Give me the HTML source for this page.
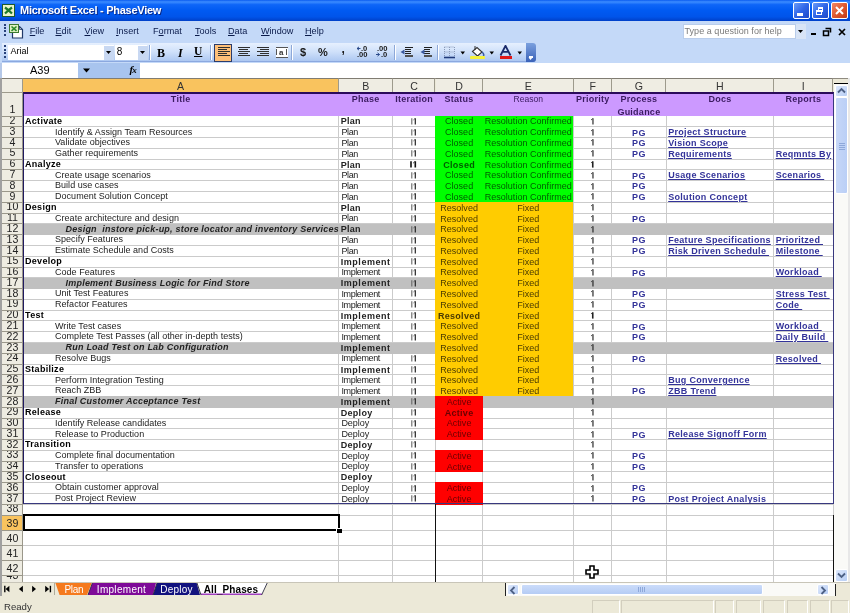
<!DOCTYPE html><html><head><meta charset="utf-8"><style>
html,body{margin:0;padding:0;}
body{width:850px;height:613px;overflow:hidden;position:relative;background:#ECE9D8;font-family:"Liberation Sans", sans-serif;-webkit-font-smoothing:antialiased;}
div{box-sizing:border-box;}
.t{position:absolute;white-space:nowrap;line-height:1;}

</style></head><body><div style="position:absolute;left:0;top:0;width:850px;height:613px;will-change:transform;">
<div style="position:absolute;left:0.00px;top:0.00px;width:850.00px;height:21.00px;background:linear-gradient(#0A5CF0 0%,#3C8CFF 9%,#0E66F8 22%,#005AF2 50%,#0054EA 80%,#0040C8 100%);"></div>
<svg style="position:absolute;left:2px;top:3.5px" width="13" height="13"><rect x="0.5" y="0.5" width="12" height="12" fill="#EAF3C8" stroke="#1E5A2A" stroke-width="1"/><path d="M3 3.5 Q6.5 6 10 9.5 M10 3.5 Q6.5 6 3 9.5" stroke="#1F7A2A" stroke-width="2.2" fill="none"/></svg>
<div class="t" style="left:20px;top:4.5px;font-size:11px;font-weight:bold;color:#fff;letter-spacing:-0.27px;text-shadow:1px 1px 0 #0A2A8A;">Microsoft Excel - PhaseView</div>
<div style="position:absolute;left:793.00px;top:2.00px;width:16.50px;height:17.00px;background:linear-gradient(135deg,#6A9BF8,#2F66E8 50%,#1D48C8);border:1px solid #fff;border-radius:2px;"></div>
<div style="position:absolute;left:812.00px;top:2.00px;width:16.50px;height:17.00px;background:linear-gradient(135deg,#6A9BF8,#2F66E8 50%,#1D48C8);border:1px solid #fff;border-radius:2px;"></div>
<div style="position:absolute;left:831.00px;top:2.00px;width:17.00px;height:17.00px;background:linear-gradient(135deg,#F08868,#E05A30 50%,#C03A18);border:1px solid #fff;border-radius:2px;"></div>
<div style="position:absolute;left:797.00px;top:13.00px;width:6.00px;height:3.00px;background:#fff;"></div>
<div style="position:absolute;left:817.50px;top:7.00px;width:5.50px;height:4.50px;border:1.5px solid #fff;border-top-width:2px;"></div>
<div style="position:absolute;left:815.50px;top:9.50px;width:6.00px;height:5.00px;border:1.5px solid #fff;border-top-width:2px;background:#2F66E8;"></div>
<svg style="position:absolute;left:833px;top:4px" width="13" height="13"><path d="M3 3 L10 10 M10 3 L3 10" stroke="#fff" stroke-width="2" /></svg>
<div style="position:absolute;left:0.00px;top:21.00px;width:850.00px;height:41.50px;background:#C4D9F8;"></div>
<div style="position:absolute;left:4.00px;top:24.00px;width:2.00px;height:2.00px;background:#27417A;"></div>
<div style="position:absolute;left:4.00px;top:27.20px;width:2.00px;height:2.00px;background:#27417A;"></div>
<div style="position:absolute;left:4.00px;top:30.40px;width:2.00px;height:2.00px;background:#27417A;"></div>
<div style="position:absolute;left:4.00px;top:33.60px;width:2.00px;height:2.00px;background:#27417A;"></div>
<svg style="position:absolute;left:8px;top:23px" width="16" height="16"><path d="M4.5 3.5 h7 l3 3 v8.5 h-10 z" fill="#fff" stroke="#203A6A" stroke-width="1.2"/><path d="M11.5 3.5 v3 h3" fill="none" stroke="#203A6A" stroke-width="0.8"/><rect x="1.5" y="1.5" width="9" height="8" fill="#DFF0C0" stroke="#3D7A30" stroke-width="1"/><path d="M3.5 3.5 L8.5 7.8 M8.5 3.5 L3.5 7.8" stroke="#2A8A2A" stroke-width="1.6"/></svg>
<div class="t" style="left:29.7px;top:27.2px;font-size:9.1px;color:#0A1A4A;"><u>F</u>ile</div>
<div class="t" style="left:55.5px;top:27.2px;font-size:9.1px;color:#0A1A4A;"><u>E</u>dit</div>
<div class="t" style="left:84.5px;top:27.2px;font-size:9.1px;color:#0A1A4A;"><u>V</u>iew</div>
<div class="t" style="left:116px;top:27.2px;font-size:9.1px;color:#0A1A4A;"><u>I</u>nsert</div>
<div class="t" style="left:153px;top:27.2px;font-size:9.1px;color:#0A1A4A;">F<u>o</u>rmat</div>
<div class="t" style="left:195px;top:27.2px;font-size:9.1px;color:#0A1A4A;"><u>T</u>ools</div>
<div class="t" style="left:228px;top:27.2px;font-size:9.1px;color:#0A1A4A;"><u>D</u>ata</div>
<div class="t" style="left:261px;top:27.2px;font-size:9.1px;color:#0A1A4A;"><u>W</u>indow</div>
<div class="t" style="left:305px;top:27.2px;font-size:9.1px;color:#0A1A4A;"><u>H</u>elp</div>
<div style="position:absolute;left:683.00px;top:24.00px;width:113.00px;height:15.00px;background:#fff;border:1px solid #B9CDEB;"></div>
<div class="t" style="left:684.5px;top:27px;font-size:9px;letter-spacing:0.05px;color:#7a7a7a;">Type a question for help</div>
<div style="position:absolute;left:796.00px;top:24.00px;width:9.50px;height:15.00px;background:#D8E4F6;"></div>
<svg style="position:absolute;left:797px;top:29px" width="8" height="5"><path d="M1 1 L6 1 L3.5 4 Z" fill="#000"/></svg>
<div style="position:absolute;left:811.00px;top:33.00px;width:5.00px;height:2.00px;background:#000;"></div>
<svg style="position:absolute;left:822px;top:27px" width="10" height="10"><path d="M3.5 1.5 h5 v4 M1.5 4 h5 v4.5 h-5 z" stroke="#000" stroke-width="1.5" fill="none"/></svg>
<svg style="position:absolute;left:837px;top:27px" width="10" height="10"><path d="M2 2 L8 8 M8 2 L2 8" stroke="#000" stroke-width="1.7"/></svg>
<div style="position:absolute;left:2.00px;top:42.50px;width:534.00px;height:19.50px;background:linear-gradient(#E6F0FE,#D0E1FA 45%,#AFC9F2 92%,#7A98D6 100%);border-radius:0 3px 3px 0;"></div>
<div style="position:absolute;left:526.00px;top:42.50px;width:10.00px;height:19.50px;background:linear-gradient(#7BA0DE,#3A62B8);border-radius:0 3px 3px 0;"></div>
<div style="position:absolute;left:528.50px;top:56.00px;width:4.00px;height:1.50px;background:#fff;"></div>
<svg style="position:absolute;left:528px;top:57px" width="6" height="4"><path d="M0.5 0.5 L4.5 0.5 L2.5 3 Z" fill="#fff"/></svg>
<div style="position:absolute;left:4.00px;top:45.00px;width:2.00px;height:2.00px;background:#27417A;"></div>
<div style="position:absolute;left:4.00px;top:48.50px;width:2.00px;height:2.00px;background:#27417A;"></div>
<div style="position:absolute;left:4.00px;top:52.00px;width:2.00px;height:2.00px;background:#27417A;"></div>
<div style="position:absolute;left:4.00px;top:55.50px;width:2.00px;height:2.00px;background:#27417A;"></div>
<div style="position:absolute;left:8.00px;top:45.00px;width:105.50px;height:15.00px;background:#fff;border:1px solid #fff;"></div>
<div class="t" style="left:10.5px;top:47.3px;font-size:9px;color:#000;">Arial</div>
<div style="position:absolute;left:104.00px;top:45.50px;width:9.50px;height:14.00px;background:#C8D8F2;"></div>
<svg style="position:absolute;left:105px;top:50px" width="8" height="5"><path d="M1 1 L6 1 L3.5 4 Z" fill="#000"/></svg>
<div style="position:absolute;left:115.00px;top:45.00px;width:32.00px;height:15.00px;background:#fff;"></div>
<div class="t" style="left:116.8px;top:46.8px;font-size:10px;color:#000;">8</div>
<div style="position:absolute;left:138.00px;top:45.50px;width:9.50px;height:14.00px;background:#C8D8F2;"></div>
<svg style="position:absolute;left:139px;top:50px" width="8" height="5"><path d="M1 1 L6 1 L3.5 4 Z" fill="#000"/></svg>
<div style="position:absolute;left:149.00px;top:45.00px;width:1.00px;height:15.00px;background:#8DA8D8;border-right:1px solid #fff;width:2px;"></div>
<div class="t" style="left:157px;top:46.5px;font-size:12px;font-weight:bold;font-family:'Liberation Serif',serif;color:#000;">B</div>
<div class="t" style="left:178px;top:46.5px;font-size:12px;font-weight:bold;font-style:italic;font-family:'Liberation Serif',serif;color:#000;">I</div>
<div class="t" style="left:194px;top:46px;font-size:11.5px;font-weight:bold;font-family:'Liberation Serif',serif;color:#000;text-decoration:underline;">U</div>
<div style="position:absolute;left:210.00px;top:45.00px;width:1.00px;height:15.00px;background:#8DA8D8;border-right:1px solid #fff;width:2px;"></div>
<div style="position:absolute;left:214.00px;top:43.50px;width:18.00px;height:18.00px;background:#FFC078;border:1px solid #2A3C6C;"></div>
<div style="position:absolute;left:218.00px;top:47.00px;width:12.00px;height:1.40px;background:#303030;"></div>
<div style="position:absolute;left:218.00px;top:49.00px;width:9.00px;height:1.40px;background:#303030;"></div>
<div style="position:absolute;left:218.00px;top:51.00px;width:12.00px;height:1.40px;background:#303030;"></div>
<div style="position:absolute;left:218.00px;top:53.00px;width:9.00px;height:1.40px;background:#303030;"></div>
<div style="position:absolute;left:218.00px;top:55.00px;width:12.00px;height:1.40px;background:#303030;"></div>
<div style="position:absolute;left:237.50px;top:47.00px;width:12.00px;height:1.40px;background:#303030;"></div>
<div style="position:absolute;left:239.00px;top:49.00px;width:9.00px;height:1.40px;background:#303030;"></div>
<div style="position:absolute;left:237.50px;top:51.00px;width:12.00px;height:1.40px;background:#303030;"></div>
<div style="position:absolute;left:239.00px;top:53.00px;width:9.00px;height:1.40px;background:#303030;"></div>
<div style="position:absolute;left:237.50px;top:55.00px;width:12.00px;height:1.40px;background:#303030;"></div>
<div style="position:absolute;left:256.50px;top:47.00px;width:12.00px;height:1.40px;background:#303030;"></div>
<div style="position:absolute;left:259.50px;top:49.00px;width:9.00px;height:1.40px;background:#303030;"></div>
<div style="position:absolute;left:256.50px;top:51.00px;width:12.00px;height:1.40px;background:#303030;"></div>
<div style="position:absolute;left:259.50px;top:53.00px;width:9.00px;height:1.40px;background:#303030;"></div>
<div style="position:absolute;left:256.50px;top:55.00px;width:12.00px;height:1.40px;background:#303030;"></div>
<div style="position:absolute;left:275.50px;top:46.50px;width:12.00px;height:11.00px;border-top:1.5px solid #555;border-bottom:1.5px solid #555;background:#fff;"></div>
<div style="position:absolute;left:275.50px;top:49.00px;width:1.20px;height:6.00px;background:#555;"></div>
<div style="position:absolute;left:286.30px;top:49.00px;width:1.20px;height:6.00px;background:#555;"></div>
<div class="t" style="left:279px;top:48.5px;font-size:8px;font-weight:bold;color:#333;">a</div>
<div style="position:absolute;left:291.00px;top:45.00px;width:1.00px;height:15.00px;background:#8DA8D8;border-right:1px solid #fff;width:2px;"></div>
<div class="t" style="left:300px;top:47px;font-size:11px;font-weight:bold;color:#1a1a1a;">$</div>
<div class="t" style="left:318px;top:47px;font-size:11px;font-weight:bold;color:#1a1a1a;">%</div>
<div class="t" style="left:341.5px;top:43px;font-size:12px;font-weight:bold;color:#1a1a1a;">,</div>
<svg style="position:absolute;left:355px;top:46px" width="36" height="12"><path d="M2 2.5 h3.5 M2 2.5 l2 -1.6 M2 2.5 l2 1.6" stroke="#2A4A8A" stroke-width="1" fill="none"/><path d="M21 8.5 h3.5 M24.5 8.5 l-2 -1.6 M24.5 8.5 l-2 1.6" stroke="#2A4A8A" stroke-width="1" fill="none"/></svg>
<div class="t" style="left:361px;top:45.3px;font-size:7.6px;font-weight:bold;color:#1a1a1a;">.0</div>
<div class="t" style="left:357px;top:50.5px;font-size:7.6px;font-weight:bold;color:#1a1a1a;">.00</div>
<div class="t" style="left:377px;top:45.3px;font-size:7.6px;font-weight:bold;color:#1a1a1a;">.00</div>
<div class="t" style="left:381px;top:50.5px;font-size:7.6px;font-weight:bold;color:#1a1a1a;">.0</div>
<div style="position:absolute;left:393.50px;top:45.00px;width:1.00px;height:15.00px;background:#8DA8D8;border-right:1px solid #fff;width:2px;"></div>
<div style="position:absolute;left:404.50px;top:46.50px;width:8.00px;height:1.40px;background:#202020;"></div>
<div style="position:absolute;left:404.50px;top:48.70px;width:6.00px;height:1.40px;background:#202020;"></div>
<div style="position:absolute;left:404.50px;top:50.90px;width:6.00px;height:1.40px;background:#202020;"></div>
<div style="position:absolute;left:404.50px;top:53.10px;width:6.00px;height:1.40px;background:#202020;"></div>
<div style="position:absolute;left:404.50px;top:55.30px;width:8.00px;height:1.40px;background:#505050;"></div>
<svg style="position:absolute;left:400px;top:49px" width="5" height="6"><path d="M4.5 0.5 L0.5 3 L4.5 5.5 Z" fill="#3A5AA0"/></svg>
<div style="position:absolute;left:424.00px;top:46.50px;width:8.00px;height:1.40px;background:#202020;"></div>
<div style="position:absolute;left:424.00px;top:48.70px;width:6.00px;height:1.40px;background:#202020;"></div>
<div style="position:absolute;left:424.00px;top:50.90px;width:6.00px;height:1.40px;background:#202020;"></div>
<div style="position:absolute;left:424.00px;top:53.10px;width:6.00px;height:1.40px;background:#202020;"></div>
<div style="position:absolute;left:424.00px;top:55.30px;width:8.00px;height:1.40px;background:#505050;"></div>
<svg style="position:absolute;left:419.5px;top:49px" width="5" height="6"><path d="M4.5 0.5 L0.5 3 L4.5 5.5 Z" fill="#3A5AA0"/></svg>
<div style="position:absolute;left:437.00px;top:45.00px;width:1.00px;height:15.00px;background:#8DA8D8;border-right:1px solid #fff;width:2px;"></div>
<svg style="position:absolute;left:443px;top:46px" width="14" height="13"><path d="M1.5 1 v10 M6.5 1 v10 M11.5 1 v10 M1.5 1 h10 M1.5 6 h10" stroke="#8A9AB8" stroke-width="1" stroke-dasharray="1 1" fill="none"/><path d="M1 11.5 h11" stroke="#203A7A" stroke-width="1.6"/></svg>
<svg style="position:absolute;left:460px;top:51px" width="6" height="4"><path d="M0.5 0.5 L5 0.5 L2.75 3.5 Z" fill="#000"/></svg>
<svg style="position:absolute;left:470px;top:45px" width="16" height="16"><path d="M2.5 6.5 L7 2.5 L12 7 L7.5 11 Z" fill="#fff" stroke="#333" stroke-width="1.1"/><path d="M5 1 L5 5" stroke="#333" stroke-width="1"/><path d="M12 7 Q14.5 9 13.5 11" stroke="#3A5AA0" stroke-width="1.5" fill="none"/></svg>
<div style="position:absolute;left:470.00px;top:55.50px;width:14.50px;height:3.50px;background:#F6F23A;border-radius:1px;"></div>
<svg style="position:absolute;left:488.5px;top:51px" width="6" height="4"><path d="M0.5 0.5 L5 0.5 L2.75 3.5 Z" fill="#000"/></svg>
<svg style="position:absolute;left:499px;top:45px" width="14" height="11"><path d="M1.5 10.5 L6.5 0.8 L11.5 10.5 M3.8 6.8 h5.4" stroke="#1A2A6A" stroke-width="1.8" fill="none"/></svg>
<div style="position:absolute;left:499.50px;top:56.00px;width:12.50px;height:3.00px;background:#E01818;"></div>
<svg style="position:absolute;left:516.5px;top:51px" width="6" height="4"><path d="M0.5 0.5 L5 0.5 L2.75 3.5 Z" fill="#000"/></svg>
<div style="position:absolute;left:0.00px;top:62.50px;width:850.00px;height:15.50px;background:#fff;"></div>
<div style="position:absolute;left:0.00px;top:62.50px;width:2.00px;height:15.50px;background:#B5C8E8;"></div>
<div style="position:absolute;left:78.00px;top:62.50px;width:62.00px;height:15.00px;background:#A8C4EE;"></div>
<div class="t" style="left:30px;top:64.5px;font-size:11px;color:#000;">A39</div>
<svg style="position:absolute;left:82px;top:68px" width="9" height="5"><path d="M1 0.5 L8 0.5 L4.5 4.5 Z" fill="#000"/></svg>
<div class="t" style="left:129.5px;top:64.2px;font-size:11px;font-weight:bold;font-style:italic;font-family:'Liberation Serif',serif;color:#000;letter-spacing:-1px;">f<span style="font-size:9px">x</span></div>
<div style="position:absolute;left:0.00px;top:78.00px;width:2.00px;height:504.40px;background:#A0A0A0;"></div>
<div style="position:absolute;left:2.00px;top:78.00px;width:831.00px;height:14.50px;background:#ECE9D8;border-top:1px solid #8F8B80;"></div>
<div style="position:absolute;left:2.00px;top:78.00px;width:20.50px;height:14.50px;background:#EFEDE3;border-top:1px solid #807C72;border-right:1px solid #9D9A8C;border-bottom:1px solid #9D9A8C;"></div>
<div style="position:absolute;left:22.50px;top:78.00px;width:316.20px;height:14.50px;background:#F9C35E;border-top:1px solid #807C72;border-right:1px solid #9D9A8C;border-bottom:1px solid #E8E6DC;"></div>
<div class="t" style="left:22.50px;width:316.20px;text-align:center;top:81.00px;font-size:10.6px;color:#333;">A</div>
<div style="position:absolute;left:338.70px;top:78.00px;width:54.00px;height:14.50px;background:#EFEDE3;border-top:1px solid #807C72;border-right:1px solid #9D9A8C;border-bottom:1px solid #E8E6DC;"></div>
<div class="t" style="left:338.70px;width:54.00px;text-align:center;top:81.00px;font-size:10.6px;color:#333;">B</div>
<div style="position:absolute;left:392.70px;top:78.00px;width:42.80px;height:14.50px;background:#EFEDE3;border-top:1px solid #807C72;border-right:1px solid #9D9A8C;border-bottom:1px solid #E8E6DC;"></div>
<div class="t" style="left:392.70px;width:42.80px;text-align:center;top:81.00px;font-size:10.6px;color:#333;">C</div>
<div style="position:absolute;left:435.50px;top:78.00px;width:47.20px;height:14.50px;background:#EFEDE3;border-top:1px solid #807C72;border-right:1px solid #9D9A8C;border-bottom:1px solid #E8E6DC;"></div>
<div class="t" style="left:435.50px;width:47.20px;text-align:center;top:81.00px;font-size:10.6px;color:#333;">D</div>
<div style="position:absolute;left:482.70px;top:78.00px;width:91.10px;height:14.50px;background:#EFEDE3;border-top:1px solid #807C72;border-right:1px solid #9D9A8C;border-bottom:1px solid #E8E6DC;"></div>
<div class="t" style="left:482.70px;width:91.10px;text-align:center;top:81.00px;font-size:10.6px;color:#333;">E</div>
<div style="position:absolute;left:573.80px;top:78.00px;width:37.80px;height:14.50px;background:#EFEDE3;border-top:1px solid #807C72;border-right:1px solid #9D9A8C;border-bottom:1px solid #E8E6DC;"></div>
<div class="t" style="left:573.80px;width:37.80px;text-align:center;top:81.00px;font-size:10.6px;color:#333;">F</div>
<div style="position:absolute;left:611.60px;top:78.00px;width:54.60px;height:14.50px;background:#EFEDE3;border-top:1px solid #807C72;border-right:1px solid #9D9A8C;border-bottom:1px solid #E8E6DC;"></div>
<div class="t" style="left:611.60px;width:54.60px;text-align:center;top:81.00px;font-size:10.6px;color:#333;">G</div>
<div style="position:absolute;left:666.20px;top:78.00px;width:107.50px;height:14.50px;background:#EFEDE3;border-top:1px solid #807C72;border-right:1px solid #9D9A8C;border-bottom:1px solid #E8E6DC;"></div>
<div class="t" style="left:666.20px;width:107.50px;text-align:center;top:81.00px;font-size:10.6px;color:#333;">H</div>
<div style="position:absolute;left:773.70px;top:78.00px;width:59.30px;height:14.50px;background:#EFEDE3;border-top:1px solid #807C72;border-right:1px solid #9D9A8C;border-bottom:1px solid #E8E6DC;"></div>
<div class="t" style="left:773.70px;width:59.30px;text-align:center;top:81.00px;font-size:10.6px;color:#333;">I</div>
<div style="position:absolute;left:833.00px;top:78.00px;width:17.00px;height:6.00px;background:#ECE9D8;border-top:1px solid #8F8B80;"></div>
<div style="position:absolute;left:834.00px;top:83.00px;width:14.00px;height:1.50px;background:#000;"></div>
<div style="position:absolute;left:22.50px;top:92.50px;width:810.50px;height:489.90px;background:#fff;"></div>
<div style="position:absolute;left:2.00px;top:93.00px;width:20.00px;height:23.50px;background:#EEECE2;overflow:hidden;"><div class="t" style="left:0.5px;width:100%;text-align:center;bottom:1.6px;font-size:10.6px;color:#222;">1</div></div>
<div style="position:absolute;left:2.00px;top:115.50px;width:20.50px;height:1.00px;background:#9A978A;"></div>
<div style="position:absolute;left:2.00px;top:116.50px;width:20.00px;height:10.79px;background:#EEECE2;overflow:hidden;"><div class="t" style="left:0.5px;width:100%;text-align:center;bottom:1.6px;font-size:10.6px;color:#222;">2</div></div>
<div style="position:absolute;left:2.00px;top:126.29px;width:20.50px;height:1.00px;background:#9A978A;"></div>
<div style="position:absolute;left:2.00px;top:127.29px;width:20.00px;height:10.79px;background:#EEECE2;overflow:hidden;"><div class="t" style="left:0.5px;width:100%;text-align:center;bottom:1.6px;font-size:10.6px;color:#222;">3</div></div>
<div style="position:absolute;left:2.00px;top:137.07px;width:20.50px;height:1.00px;background:#9A978A;"></div>
<div style="position:absolute;left:2.00px;top:138.07px;width:20.00px;height:10.79px;background:#EEECE2;overflow:hidden;"><div class="t" style="left:0.5px;width:100%;text-align:center;bottom:1.6px;font-size:10.6px;color:#222;">4</div></div>
<div style="position:absolute;left:2.00px;top:147.86px;width:20.50px;height:1.00px;background:#9A978A;"></div>
<div style="position:absolute;left:2.00px;top:148.86px;width:20.00px;height:10.79px;background:#EEECE2;overflow:hidden;"><div class="t" style="left:0.5px;width:100%;text-align:center;bottom:1.6px;font-size:10.6px;color:#222;">5</div></div>
<div style="position:absolute;left:2.00px;top:158.64px;width:20.50px;height:1.00px;background:#9A978A;"></div>
<div style="position:absolute;left:2.00px;top:159.64px;width:20.00px;height:10.79px;background:#EEECE2;overflow:hidden;"><div class="t" style="left:0.5px;width:100%;text-align:center;bottom:1.6px;font-size:10.6px;color:#222;">6</div></div>
<div style="position:absolute;left:2.00px;top:169.43px;width:20.50px;height:1.00px;background:#9A978A;"></div>
<div style="position:absolute;left:2.00px;top:170.43px;width:20.00px;height:10.79px;background:#EEECE2;overflow:hidden;"><div class="t" style="left:0.5px;width:100%;text-align:center;bottom:1.6px;font-size:10.6px;color:#222;">7</div></div>
<div style="position:absolute;left:2.00px;top:180.22px;width:20.50px;height:1.00px;background:#9A978A;"></div>
<div style="position:absolute;left:2.00px;top:181.22px;width:20.00px;height:10.79px;background:#EEECE2;overflow:hidden;"><div class="t" style="left:0.5px;width:100%;text-align:center;bottom:1.6px;font-size:10.6px;color:#222;">8</div></div>
<div style="position:absolute;left:2.00px;top:191.00px;width:20.50px;height:1.00px;background:#9A978A;"></div>
<div style="position:absolute;left:2.00px;top:192.00px;width:20.00px;height:10.79px;background:#EEECE2;overflow:hidden;"><div class="t" style="left:0.5px;width:100%;text-align:center;bottom:1.6px;font-size:10.6px;color:#222;">9</div></div>
<div style="position:absolute;left:2.00px;top:201.79px;width:20.50px;height:1.00px;background:#9A978A;"></div>
<div style="position:absolute;left:2.00px;top:202.79px;width:20.00px;height:10.79px;background:#EEECE2;overflow:hidden;"><div class="t" style="left:0.5px;width:100%;text-align:center;bottom:1.6px;font-size:10.6px;color:#222;">10</div></div>
<div style="position:absolute;left:2.00px;top:212.57px;width:20.50px;height:1.00px;background:#9A978A;"></div>
<div style="position:absolute;left:2.00px;top:213.57px;width:20.00px;height:10.79px;background:#EEECE2;overflow:hidden;"><div class="t" style="left:0.5px;width:100%;text-align:center;bottom:1.6px;font-size:10.6px;color:#222;">11</div></div>
<div style="position:absolute;left:2.00px;top:223.36px;width:20.50px;height:1.00px;background:#9A978A;"></div>
<div style="position:absolute;left:2.00px;top:224.36px;width:20.00px;height:10.79px;background:#EEECE2;overflow:hidden;"><div class="t" style="left:0.5px;width:100%;text-align:center;bottom:1.6px;font-size:10.6px;color:#222;">12</div></div>
<div style="position:absolute;left:2.00px;top:234.15px;width:20.50px;height:1.00px;background:#9A978A;"></div>
<div style="position:absolute;left:2.00px;top:235.15px;width:20.00px;height:10.79px;background:#EEECE2;overflow:hidden;"><div class="t" style="left:0.5px;width:100%;text-align:center;bottom:1.6px;font-size:10.6px;color:#222;">13</div></div>
<div style="position:absolute;left:2.00px;top:244.93px;width:20.50px;height:1.00px;background:#9A978A;"></div>
<div style="position:absolute;left:2.00px;top:245.93px;width:20.00px;height:10.79px;background:#EEECE2;overflow:hidden;"><div class="t" style="left:0.5px;width:100%;text-align:center;bottom:1.6px;font-size:10.6px;color:#222;">14</div></div>
<div style="position:absolute;left:2.00px;top:255.72px;width:20.50px;height:1.00px;background:#9A978A;"></div>
<div style="position:absolute;left:2.00px;top:256.72px;width:20.00px;height:10.79px;background:#EEECE2;overflow:hidden;"><div class="t" style="left:0.5px;width:100%;text-align:center;bottom:1.6px;font-size:10.6px;color:#222;">15</div></div>
<div style="position:absolute;left:2.00px;top:266.50px;width:20.50px;height:1.00px;background:#9A978A;"></div>
<div style="position:absolute;left:2.00px;top:267.50px;width:20.00px;height:10.79px;background:#EEECE2;overflow:hidden;"><div class="t" style="left:0.5px;width:100%;text-align:center;bottom:1.6px;font-size:10.6px;color:#222;">16</div></div>
<div style="position:absolute;left:2.00px;top:277.29px;width:20.50px;height:1.00px;background:#9A978A;"></div>
<div style="position:absolute;left:2.00px;top:278.29px;width:20.00px;height:10.79px;background:#EEECE2;overflow:hidden;"><div class="t" style="left:0.5px;width:100%;text-align:center;bottom:1.6px;font-size:10.6px;color:#222;">17</div></div>
<div style="position:absolute;left:2.00px;top:288.08px;width:20.50px;height:1.00px;background:#9A978A;"></div>
<div style="position:absolute;left:2.00px;top:289.08px;width:20.00px;height:10.79px;background:#EEECE2;overflow:hidden;"><div class="t" style="left:0.5px;width:100%;text-align:center;bottom:1.6px;font-size:10.6px;color:#222;">18</div></div>
<div style="position:absolute;left:2.00px;top:298.86px;width:20.50px;height:1.00px;background:#9A978A;"></div>
<div style="position:absolute;left:2.00px;top:299.86px;width:20.00px;height:10.79px;background:#EEECE2;overflow:hidden;"><div class="t" style="left:0.5px;width:100%;text-align:center;bottom:1.6px;font-size:10.6px;color:#222;">19</div></div>
<div style="position:absolute;left:2.00px;top:309.65px;width:20.50px;height:1.00px;background:#9A978A;"></div>
<div style="position:absolute;left:2.00px;top:310.65px;width:20.00px;height:10.79px;background:#EEECE2;overflow:hidden;"><div class="t" style="left:0.5px;width:100%;text-align:center;bottom:1.6px;font-size:10.6px;color:#222;">20</div></div>
<div style="position:absolute;left:2.00px;top:320.43px;width:20.50px;height:1.00px;background:#9A978A;"></div>
<div style="position:absolute;left:2.00px;top:321.43px;width:20.00px;height:10.79px;background:#EEECE2;overflow:hidden;"><div class="t" style="left:0.5px;width:100%;text-align:center;bottom:1.6px;font-size:10.6px;color:#222;">21</div></div>
<div style="position:absolute;left:2.00px;top:331.22px;width:20.50px;height:1.00px;background:#9A978A;"></div>
<div style="position:absolute;left:2.00px;top:332.22px;width:20.00px;height:10.79px;background:#EEECE2;overflow:hidden;"><div class="t" style="left:0.5px;width:100%;text-align:center;bottom:1.6px;font-size:10.6px;color:#222;">22</div></div>
<div style="position:absolute;left:2.00px;top:342.01px;width:20.50px;height:1.00px;background:#9A978A;"></div>
<div style="position:absolute;left:2.00px;top:343.01px;width:20.00px;height:10.79px;background:#EEECE2;overflow:hidden;"><div class="t" style="left:0.5px;width:100%;text-align:center;bottom:1.6px;font-size:10.6px;color:#222;">23</div></div>
<div style="position:absolute;left:2.00px;top:352.79px;width:20.50px;height:1.00px;background:#9A978A;"></div>
<div style="position:absolute;left:2.00px;top:353.79px;width:20.00px;height:10.79px;background:#EEECE2;overflow:hidden;"><div class="t" style="left:0.5px;width:100%;text-align:center;bottom:1.6px;font-size:10.6px;color:#222;">24</div></div>
<div style="position:absolute;left:2.00px;top:363.58px;width:20.50px;height:1.00px;background:#9A978A;"></div>
<div style="position:absolute;left:2.00px;top:364.58px;width:20.00px;height:10.79px;background:#EEECE2;overflow:hidden;"><div class="t" style="left:0.5px;width:100%;text-align:center;bottom:1.6px;font-size:10.6px;color:#222;">25</div></div>
<div style="position:absolute;left:2.00px;top:374.36px;width:20.50px;height:1.00px;background:#9A978A;"></div>
<div style="position:absolute;left:2.00px;top:375.36px;width:20.00px;height:10.79px;background:#EEECE2;overflow:hidden;"><div class="t" style="left:0.5px;width:100%;text-align:center;bottom:1.6px;font-size:10.6px;color:#222;">26</div></div>
<div style="position:absolute;left:2.00px;top:385.15px;width:20.50px;height:1.00px;background:#9A978A;"></div>
<div style="position:absolute;left:2.00px;top:386.15px;width:20.00px;height:10.79px;background:#EEECE2;overflow:hidden;"><div class="t" style="left:0.5px;width:100%;text-align:center;bottom:1.6px;font-size:10.6px;color:#222;">27</div></div>
<div style="position:absolute;left:2.00px;top:395.94px;width:20.50px;height:1.00px;background:#9A978A;"></div>
<div style="position:absolute;left:2.00px;top:396.94px;width:20.00px;height:10.79px;background:#EEECE2;overflow:hidden;"><div class="t" style="left:0.5px;width:100%;text-align:center;bottom:1.6px;font-size:10.6px;color:#222;">28</div></div>
<div style="position:absolute;left:2.00px;top:406.72px;width:20.50px;height:1.00px;background:#9A978A;"></div>
<div style="position:absolute;left:2.00px;top:407.72px;width:20.00px;height:10.79px;background:#EEECE2;overflow:hidden;"><div class="t" style="left:0.5px;width:100%;text-align:center;bottom:1.6px;font-size:10.6px;color:#222;">29</div></div>
<div style="position:absolute;left:2.00px;top:417.51px;width:20.50px;height:1.00px;background:#9A978A;"></div>
<div style="position:absolute;left:2.00px;top:418.51px;width:20.00px;height:10.79px;background:#EEECE2;overflow:hidden;"><div class="t" style="left:0.5px;width:100%;text-align:center;bottom:1.6px;font-size:10.6px;color:#222;">30</div></div>
<div style="position:absolute;left:2.00px;top:428.29px;width:20.50px;height:1.00px;background:#9A978A;"></div>
<div style="position:absolute;left:2.00px;top:429.29px;width:20.00px;height:10.79px;background:#EEECE2;overflow:hidden;"><div class="t" style="left:0.5px;width:100%;text-align:center;bottom:1.6px;font-size:10.6px;color:#222;">31</div></div>
<div style="position:absolute;left:2.00px;top:439.08px;width:20.50px;height:1.00px;background:#9A978A;"></div>
<div style="position:absolute;left:2.00px;top:440.08px;width:20.00px;height:10.79px;background:#EEECE2;overflow:hidden;"><div class="t" style="left:0.5px;width:100%;text-align:center;bottom:1.6px;font-size:10.6px;color:#222;">32</div></div>
<div style="position:absolute;left:2.00px;top:449.87px;width:20.50px;height:1.00px;background:#9A978A;"></div>
<div style="position:absolute;left:2.00px;top:450.87px;width:20.00px;height:10.79px;background:#EEECE2;overflow:hidden;"><div class="t" style="left:0.5px;width:100%;text-align:center;bottom:1.6px;font-size:10.6px;color:#222;">33</div></div>
<div style="position:absolute;left:2.00px;top:460.65px;width:20.50px;height:1.00px;background:#9A978A;"></div>
<div style="position:absolute;left:2.00px;top:461.65px;width:20.00px;height:10.79px;background:#EEECE2;overflow:hidden;"><div class="t" style="left:0.5px;width:100%;text-align:center;bottom:1.6px;font-size:10.6px;color:#222;">34</div></div>
<div style="position:absolute;left:2.00px;top:471.44px;width:20.50px;height:1.00px;background:#9A978A;"></div>
<div style="position:absolute;left:2.00px;top:472.44px;width:20.00px;height:10.79px;background:#EEECE2;overflow:hidden;"><div class="t" style="left:0.5px;width:100%;text-align:center;bottom:1.6px;font-size:10.6px;color:#222;">35</div></div>
<div style="position:absolute;left:2.00px;top:482.22px;width:20.50px;height:1.00px;background:#9A978A;"></div>
<div style="position:absolute;left:2.00px;top:483.22px;width:20.00px;height:10.79px;background:#EEECE2;overflow:hidden;"><div class="t" style="left:0.5px;width:100%;text-align:center;bottom:1.6px;font-size:10.6px;color:#222;">36</div></div>
<div style="position:absolute;left:2.00px;top:493.01px;width:20.50px;height:1.00px;background:#9A978A;"></div>
<div style="position:absolute;left:2.00px;top:494.01px;width:20.00px;height:10.79px;background:#EEECE2;overflow:hidden;"><div class="t" style="left:0.5px;width:100%;text-align:center;bottom:1.6px;font-size:10.6px;color:#222;">37</div></div>
<div style="position:absolute;left:2.00px;top:503.80px;width:20.50px;height:1.00px;background:#9A978A;"></div>
<div style="position:absolute;left:2.00px;top:504.80px;width:20.00px;height:10.79px;background:#EEECE2;overflow:hidden;"><div class="t" style="left:0.5px;width:100%;text-align:center;bottom:1.6px;font-size:10.6px;color:#222;">38</div></div>
<div style="position:absolute;left:2.00px;top:514.58px;width:20.50px;height:1.00px;background:#9A978A;"></div>
<div style="position:absolute;left:2.00px;top:515.58px;width:20.00px;height:15.20px;background:#F9C35E;overflow:hidden;"><div class="t" style="left:0.5px;width:100%;text-align:center;bottom:2.6px;font-size:10.6px;color:#222;">39</div></div>
<div style="position:absolute;left:2.00px;top:529.78px;width:20.50px;height:1.00px;background:#9A978A;"></div>
<div style="position:absolute;left:2.00px;top:530.78px;width:20.00px;height:15.20px;background:#EEECE2;overflow:hidden;"><div class="t" style="left:0.5px;width:100%;text-align:center;bottom:2.6px;font-size:10.6px;color:#222;">40</div></div>
<div style="position:absolute;left:2.00px;top:544.98px;width:20.50px;height:1.00px;background:#9A978A;"></div>
<div style="position:absolute;left:2.00px;top:545.98px;width:20.00px;height:15.20px;background:#EEECE2;overflow:hidden;"><div class="t" style="left:0.5px;width:100%;text-align:center;bottom:2.6px;font-size:10.6px;color:#222;">41</div></div>
<div style="position:absolute;left:2.00px;top:560.18px;width:20.50px;height:1.00px;background:#9A978A;"></div>
<div style="position:absolute;left:2.00px;top:561.18px;width:20.00px;height:15.20px;background:#EEECE2;overflow:hidden;"><div class="t" style="left:0.5px;width:100%;text-align:center;bottom:2.6px;font-size:10.6px;color:#222;">42</div></div>
<div style="position:absolute;left:2.00px;top:575.38px;width:20.50px;height:1.00px;background:#9A978A;"></div>
<div style="position:absolute;left:2.00px;top:576.38px;width:20.00px;height:6.52px;background:#EEECE2;overflow:hidden;"><div class="t" style="left:0.5px;width:100%;text-align:center;bottom:2.6px;font-size:10.6px;color:#222;">43</div></div>
<div style="position:absolute;left:21.50px;top:92.50px;width:1.00px;height:489.90px;background:#9A978A;"></div>
<div style="position:absolute;left:22.50px;top:126.29px;width:810.50px;height:1.00px;background:#CBCBCB;"></div>
<div style="position:absolute;left:22.50px;top:137.07px;width:810.50px;height:1.00px;background:#CBCBCB;"></div>
<div style="position:absolute;left:22.50px;top:147.86px;width:810.50px;height:1.00px;background:#CBCBCB;"></div>
<div style="position:absolute;left:22.50px;top:158.64px;width:810.50px;height:1.00px;background:#CBCBCB;"></div>
<div style="position:absolute;left:22.50px;top:169.43px;width:810.50px;height:1.00px;background:#CBCBCB;"></div>
<div style="position:absolute;left:22.50px;top:180.22px;width:810.50px;height:1.00px;background:#CBCBCB;"></div>
<div style="position:absolute;left:22.50px;top:191.00px;width:810.50px;height:1.00px;background:#CBCBCB;"></div>
<div style="position:absolute;left:22.50px;top:201.79px;width:810.50px;height:1.00px;background:#CBCBCB;"></div>
<div style="position:absolute;left:22.50px;top:212.57px;width:810.50px;height:1.00px;background:#CBCBCB;"></div>
<div style="position:absolute;left:22.50px;top:223.36px;width:810.50px;height:1.00px;background:#CBCBCB;"></div>
<div style="position:absolute;left:22.50px;top:234.15px;width:810.50px;height:1.00px;background:#CBCBCB;"></div>
<div style="position:absolute;left:22.50px;top:244.93px;width:810.50px;height:1.00px;background:#CBCBCB;"></div>
<div style="position:absolute;left:22.50px;top:255.72px;width:810.50px;height:1.00px;background:#CBCBCB;"></div>
<div style="position:absolute;left:22.50px;top:266.50px;width:810.50px;height:1.00px;background:#CBCBCB;"></div>
<div style="position:absolute;left:22.50px;top:277.29px;width:810.50px;height:1.00px;background:#CBCBCB;"></div>
<div style="position:absolute;left:22.50px;top:288.08px;width:810.50px;height:1.00px;background:#CBCBCB;"></div>
<div style="position:absolute;left:22.50px;top:298.86px;width:810.50px;height:1.00px;background:#CBCBCB;"></div>
<div style="position:absolute;left:22.50px;top:309.65px;width:810.50px;height:1.00px;background:#CBCBCB;"></div>
<div style="position:absolute;left:22.50px;top:320.43px;width:810.50px;height:1.00px;background:#CBCBCB;"></div>
<div style="position:absolute;left:22.50px;top:331.22px;width:810.50px;height:1.00px;background:#CBCBCB;"></div>
<div style="position:absolute;left:22.50px;top:342.01px;width:810.50px;height:1.00px;background:#CBCBCB;"></div>
<div style="position:absolute;left:22.50px;top:352.79px;width:810.50px;height:1.00px;background:#CBCBCB;"></div>
<div style="position:absolute;left:22.50px;top:363.58px;width:810.50px;height:1.00px;background:#CBCBCB;"></div>
<div style="position:absolute;left:22.50px;top:374.36px;width:810.50px;height:1.00px;background:#CBCBCB;"></div>
<div style="position:absolute;left:22.50px;top:385.15px;width:810.50px;height:1.00px;background:#CBCBCB;"></div>
<div style="position:absolute;left:22.50px;top:395.94px;width:810.50px;height:1.00px;background:#CBCBCB;"></div>
<div style="position:absolute;left:22.50px;top:406.72px;width:810.50px;height:1.00px;background:#CBCBCB;"></div>
<div style="position:absolute;left:22.50px;top:417.51px;width:810.50px;height:1.00px;background:#CBCBCB;"></div>
<div style="position:absolute;left:22.50px;top:428.29px;width:810.50px;height:1.00px;background:#CBCBCB;"></div>
<div style="position:absolute;left:22.50px;top:439.08px;width:810.50px;height:1.00px;background:#CBCBCB;"></div>
<div style="position:absolute;left:22.50px;top:449.87px;width:810.50px;height:1.00px;background:#CBCBCB;"></div>
<div style="position:absolute;left:22.50px;top:460.65px;width:810.50px;height:1.00px;background:#CBCBCB;"></div>
<div style="position:absolute;left:22.50px;top:471.44px;width:810.50px;height:1.00px;background:#CBCBCB;"></div>
<div style="position:absolute;left:22.50px;top:482.22px;width:810.50px;height:1.00px;background:#CBCBCB;"></div>
<div style="position:absolute;left:22.50px;top:493.01px;width:810.50px;height:1.00px;background:#CBCBCB;"></div>
<div style="position:absolute;left:22.50px;top:503.80px;width:810.50px;height:1.00px;background:#CBCBCB;"></div>
<div style="position:absolute;left:22.50px;top:514.58px;width:810.50px;height:1.00px;background:#CBCBCB;"></div>
<div style="position:absolute;left:22.50px;top:529.78px;width:810.50px;height:1.00px;background:#CBCBCB;"></div>
<div style="position:absolute;left:22.50px;top:544.98px;width:810.50px;height:1.00px;background:#CBCBCB;"></div>
<div style="position:absolute;left:22.50px;top:560.18px;width:810.50px;height:1.00px;background:#CBCBCB;"></div>
<div style="position:absolute;left:22.50px;top:575.38px;width:810.50px;height:1.00px;background:#CBCBCB;"></div>
<div style="position:absolute;left:338.20px;top:92.50px;width:1.00px;height:489.90px;background:#CBCBCB;"></div>
<div style="position:absolute;left:392.20px;top:92.50px;width:1.00px;height:489.90px;background:#CBCBCB;"></div>
<div style="position:absolute;left:435.00px;top:92.50px;width:1.00px;height:489.90px;background:#CBCBCB;"></div>
<div style="position:absolute;left:482.20px;top:92.50px;width:1.00px;height:489.90px;background:#CBCBCB;"></div>
<div style="position:absolute;left:573.30px;top:92.50px;width:1.00px;height:489.90px;background:#CBCBCB;"></div>
<div style="position:absolute;left:611.10px;top:92.50px;width:1.00px;height:489.90px;background:#CBCBCB;"></div>
<div style="position:absolute;left:665.70px;top:92.50px;width:1.00px;height:489.90px;background:#CBCBCB;"></div>
<div style="position:absolute;left:773.20px;top:92.50px;width:1.00px;height:489.90px;background:#CBCBCB;"></div>
<div style="position:absolute;left:832.50px;top:92.50px;width:1.00px;height:489.90px;background:#CBCBCB;"></div>
<div style="position:absolute;left:22.50px;top:92.50px;width:810.50px;height:23.40px;background:#CC99FF;"></div>
<div style="position:absolute;left:434.80px;top:115.50px;width:138.70px;height:11.79px;background:#00FF00;"></div>
<div style="position:absolute;left:434.80px;top:126.29px;width:138.70px;height:11.79px;background:#00FF00;"></div>
<div style="position:absolute;left:434.80px;top:137.07px;width:138.70px;height:11.79px;background:#00FF00;"></div>
<div style="position:absolute;left:434.80px;top:147.86px;width:138.70px;height:11.79px;background:#00FF00;"></div>
<div style="position:absolute;left:434.80px;top:158.64px;width:138.70px;height:11.79px;background:#00FF00;"></div>
<div style="position:absolute;left:434.80px;top:169.43px;width:138.70px;height:11.79px;background:#00FF00;"></div>
<div style="position:absolute;left:434.80px;top:180.22px;width:138.70px;height:11.79px;background:#00FF00;"></div>
<div style="position:absolute;left:434.80px;top:191.00px;width:138.70px;height:11.79px;background:#00FF00;"></div>
<div style="position:absolute;left:434.80px;top:201.79px;width:138.70px;height:11.79px;background:#FFCC00;"></div>
<div style="position:absolute;left:434.80px;top:212.57px;width:138.70px;height:11.79px;background:#FFCC00;"></div>
<div style="position:absolute;left:23.50px;top:223.86px;width:809.50px;height:11.29px;background:#C0C0C0;"></div>
<div style="position:absolute;left:434.80px;top:223.36px;width:138.70px;height:11.79px;background:#FFCC00;"></div>
<div style="position:absolute;left:434.80px;top:234.15px;width:138.70px;height:11.79px;background:#FFCC00;"></div>
<div style="position:absolute;left:434.80px;top:244.93px;width:138.70px;height:11.79px;background:#FFCC00;"></div>
<div style="position:absolute;left:434.80px;top:255.72px;width:138.70px;height:11.79px;background:#FFCC00;"></div>
<div style="position:absolute;left:434.80px;top:266.50px;width:138.70px;height:11.79px;background:#FFCC00;"></div>
<div style="position:absolute;left:23.50px;top:277.79px;width:809.50px;height:11.29px;background:#C0C0C0;"></div>
<div style="position:absolute;left:434.80px;top:277.29px;width:138.70px;height:11.79px;background:#FFCC00;"></div>
<div style="position:absolute;left:434.80px;top:288.08px;width:138.70px;height:11.79px;background:#FFCC00;"></div>
<div style="position:absolute;left:434.80px;top:298.86px;width:138.70px;height:11.79px;background:#FFCC00;"></div>
<div style="position:absolute;left:434.80px;top:309.65px;width:138.70px;height:11.79px;background:#FFCC00;"></div>
<div style="position:absolute;left:434.80px;top:320.43px;width:138.70px;height:11.79px;background:#FFCC00;"></div>
<div style="position:absolute;left:434.80px;top:331.22px;width:138.70px;height:11.79px;background:#FFCC00;"></div>
<div style="position:absolute;left:23.50px;top:342.51px;width:809.50px;height:11.29px;background:#C0C0C0;"></div>
<div style="position:absolute;left:434.80px;top:342.01px;width:138.70px;height:11.79px;background:#FFCC00;"></div>
<div style="position:absolute;left:434.80px;top:352.79px;width:138.70px;height:11.79px;background:#FFCC00;"></div>
<div style="position:absolute;left:434.80px;top:363.58px;width:138.70px;height:11.79px;background:#FFCC00;"></div>
<div style="position:absolute;left:434.80px;top:374.36px;width:138.70px;height:11.79px;background:#FFCC00;"></div>
<div style="position:absolute;left:434.80px;top:385.15px;width:138.70px;height:11.79px;background:#FFCC00;"></div>
<div style="position:absolute;left:23.50px;top:396.44px;width:809.50px;height:11.29px;background:#C0C0C0;"></div>
<div style="position:absolute;left:434.80px;top:395.94px;width:47.90px;height:11.79px;background:#FF0000;"></div>
<div style="position:absolute;left:434.80px;top:406.72px;width:47.90px;height:11.79px;background:#FF0000;"></div>
<div style="position:absolute;left:434.80px;top:417.51px;width:47.90px;height:11.79px;background:#FF0000;"></div>
<div style="position:absolute;left:434.80px;top:428.29px;width:47.90px;height:11.79px;background:#FF0000;"></div>
<div style="position:absolute;left:434.80px;top:449.87px;width:47.90px;height:11.79px;background:#FF0000;"></div>
<div style="position:absolute;left:434.80px;top:460.65px;width:47.90px;height:11.79px;background:#FF0000;"></div>
<div style="position:absolute;left:434.80px;top:482.22px;width:47.90px;height:11.79px;background:#FF0000;"></div>
<div style="position:absolute;left:434.80px;top:493.01px;width:47.90px;height:11.79px;background:#FF0000;"></div>
<div class="t" style="left:22.50px;width:316.20px;text-align:center;top:93.10px;font-size:9.0px;line-height:12.5px;color:#3A1A60;font-weight:bold;letter-spacing:0.25px;">Title</div>
<div class="t" style="left:338.70px;width:54.00px;text-align:center;top:93.10px;font-size:9.0px;line-height:12.5px;color:#3A1A60;font-weight:bold;letter-spacing:0.25px;">Phase</div>
<div class="t" style="left:392.70px;width:42.80px;text-align:center;top:93.10px;font-size:9.0px;line-height:12.5px;color:#3A1A60;font-weight:bold;letter-spacing:0.25px;">Iteration</div>
<div class="t" style="left:435.50px;width:47.20px;text-align:center;top:93.10px;font-size:9.0px;line-height:12.5px;color:#3A1A60;font-weight:bold;letter-spacing:0.25px;">Status</div>
<div class="t" style="left:482.70px;width:91.10px;text-align:center;top:93.10px;font-size:8.549999999999999px;line-height:12.5px;color:#3A1A60;">Reason</div>
<div class="t" style="left:573.80px;width:37.80px;text-align:center;top:93.10px;font-size:9.0px;line-height:12.5px;color:#3A1A60;font-weight:bold;letter-spacing:0.25px;">Priority</div>
<div class="t" style="left:611.60px;width:54.60px;text-align:center;top:93.10px;font-size:9.0px;line-height:12.5px;color:#3A1A60;font-weight:bold;letter-spacing:0.25px;">Process<br>Guidance</div>
<div class="t" style="left:666.20px;width:107.50px;text-align:center;top:93.10px;font-size:9.0px;line-height:12.5px;color:#3A1A60;font-weight:bold;letter-spacing:0.25px;">Docs</div>
<div class="t" style="left:773.70px;width:59.30px;text-align:center;top:93.10px;font-size:9.0px;line-height:12.5px;color:#3A1A60;font-weight:bold;letter-spacing:0.25px;">Reports</div>
<div class="t" style="left:25.00px;top:116.77px;font-size:9.0px;color:#000;font-weight:bold;letter-spacing:0.30px;">Activate</div>
<div class="t" style="left:340.70px;top:117.47px;font-size:9.0px;color:#222;font-weight:bold;letter-spacing:0.30px;">Plan</div>
<svg style="position:absolute;left:409px;top:117.90px" width="10" height="8"><path d="M2.8 0.3 V6.6" stroke="#666" stroke-width="1.1"/><path d="M6.3 0.3 V6.6" stroke="#222" stroke-width="1.2"/><path d="M5.9 0.6 L4.5 1.9" stroke="#444" stroke-width="0.9"/></svg>
<div class="t" style="left:435.50px;width:47.20px;text-align:center;top:117.47px;font-size:9.0px;color:#005C00;letter-spacing:0.03px;">Closed</div>
<div class="t" style="left:482.70px;width:91.10px;text-align:center;top:117.47px;font-size:9.0px;color:#005C00;letter-spacing:0.03px;">Resolution Confirmed</div>
<svg style="position:absolute;left:590.00px;top:117.90px" width="5" height="8"><path d="M2.97 0.3 L2.97 6.6" stroke="#222" stroke-width="1.15"/><path d="M2.72 0.6 L1.0 2.0" stroke="#444" stroke-width="0.9"/></svg>
<div class="t" style="left:55.00px;top:127.55px;font-size:9.0px;color:#222;letter-spacing:0.03px;">Identify & Assign Team Resources</div>
<div class="t" style="left:341.40px;top:127.95px;font-size:9.0px;color:#222;letter-spacing:0.03px;letter-spacing:-0.35px;">Plan</div>
<svg style="position:absolute;left:409px;top:128.69px" width="10" height="8"><path d="M2.8 0.3 V6.6" stroke="#666" stroke-width="1.1"/><path d="M6.3 0.3 V6.6" stroke="#222" stroke-width="1.2"/><path d="M5.9 0.6 L4.5 1.9" stroke="#444" stroke-width="0.9"/></svg>
<div class="t" style="left:435.50px;width:47.20px;text-align:center;top:128.25px;font-size:9.0px;color:#005C00;letter-spacing:0.03px;">Closed</div>
<div class="t" style="left:482.70px;width:91.10px;text-align:center;top:128.25px;font-size:9.0px;color:#005C00;letter-spacing:0.03px;">Resolution Confirmed</div>
<svg style="position:absolute;left:590.00px;top:128.69px" width="5" height="8"><path d="M2.97 0.3 L2.97 6.6" stroke="#222" stroke-width="1.15"/><path d="M2.72 0.6 L1.0 2.0" stroke="#444" stroke-width="0.9"/></svg>
<div class="t" style="left:611.60px;width:54.60px;text-align:center;top:128.55px;font-size:9.0px;color:#333399;font-weight:bold;letter-spacing:0.30px;">PG</div>
<div class="t" style="left:668.20px;top:128.05px;font-size:9.0px;color:#333399;font-weight:bold;letter-spacing:0.30px;text-decoration:underline;">Project Structure</div>
<div class="t" style="left:55.00px;top:138.34px;font-size:9.0px;color:#222;letter-spacing:0.03px;">Validate objectives</div>
<div class="t" style="left:341.40px;top:138.74px;font-size:9.0px;color:#222;letter-spacing:0.03px;letter-spacing:-0.35px;">Plan</div>
<svg style="position:absolute;left:409px;top:139.47px" width="10" height="8"><path d="M2.8 0.3 V6.6" stroke="#666" stroke-width="1.1"/><path d="M6.3 0.3 V6.6" stroke="#222" stroke-width="1.2"/><path d="M5.9 0.6 L4.5 1.9" stroke="#444" stroke-width="0.9"/></svg>
<div class="t" style="left:435.50px;width:47.20px;text-align:center;top:139.04px;font-size:9.0px;color:#005C00;letter-spacing:0.03px;">Closed</div>
<div class="t" style="left:482.70px;width:91.10px;text-align:center;top:139.04px;font-size:9.0px;color:#005C00;letter-spacing:0.03px;">Resolution Confirmed</div>
<svg style="position:absolute;left:590.00px;top:139.47px" width="5" height="8"><path d="M2.97 0.3 L2.97 6.6" stroke="#222" stroke-width="1.15"/><path d="M2.72 0.6 L1.0 2.0" stroke="#444" stroke-width="0.9"/></svg>
<div class="t" style="left:611.60px;width:54.60px;text-align:center;top:139.34px;font-size:9.0px;color:#333399;font-weight:bold;letter-spacing:0.30px;">PG</div>
<div class="t" style="left:668.20px;top:138.84px;font-size:9.0px;color:#333399;font-weight:bold;letter-spacing:0.30px;text-decoration:underline;">Vision Scope</div>
<div class="t" style="left:55.00px;top:149.12px;font-size:9.0px;color:#222;letter-spacing:0.03px;">Gather requirements</div>
<div class="t" style="left:341.40px;top:149.52px;font-size:9.0px;color:#222;letter-spacing:0.03px;letter-spacing:-0.35px;">Plan</div>
<svg style="position:absolute;left:409px;top:150.26px" width="10" height="8"><path d="M2.8 0.3 V6.6" stroke="#666" stroke-width="1.1"/><path d="M6.3 0.3 V6.6" stroke="#222" stroke-width="1.2"/><path d="M5.9 0.6 L4.5 1.9" stroke="#444" stroke-width="0.9"/></svg>
<div class="t" style="left:435.50px;width:47.20px;text-align:center;top:149.82px;font-size:9.0px;color:#005C00;letter-spacing:0.03px;">Closed</div>
<div class="t" style="left:482.70px;width:91.10px;text-align:center;top:149.82px;font-size:9.0px;color:#005C00;letter-spacing:0.03px;">Resolution Confirmed</div>
<svg style="position:absolute;left:590.00px;top:150.26px" width="5" height="8"><path d="M2.97 0.3 L2.97 6.6" stroke="#222" stroke-width="1.15"/><path d="M2.72 0.6 L1.0 2.0" stroke="#444" stroke-width="0.9"/></svg>
<div class="t" style="left:611.60px;width:54.60px;text-align:center;top:150.12px;font-size:9.0px;color:#333399;font-weight:bold;letter-spacing:0.30px;">PG</div>
<div class="t" style="left:668.20px;top:149.62px;font-size:9.0px;color:#333399;font-weight:bold;letter-spacing:0.30px;text-decoration:underline;">Requirements</div>
<div class="t" style="left:775.70px;top:149.62px;font-size:9.0px;color:#333399;font-weight:bold;letter-spacing:0.30px;text-decoration:underline;">Reqmnts By</div>
<div class="t" style="left:25.00px;top:159.91px;font-size:9.0px;color:#000;font-weight:bold;letter-spacing:0.30px;">Analyze</div>
<div class="t" style="left:340.70px;top:160.61px;font-size:9.0px;color:#222;font-weight:bold;letter-spacing:0.30px;">Plan</div>
<svg style="position:absolute;left:409px;top:161.04px" width="10" height="8"><path d="M2 0.3 V6.6 M6.3 0.3 V6.6" stroke="#111" stroke-width="1.6"/><path d="M5.8 0.7 L4.2 2.1" stroke="#222" stroke-width="1"/></svg>
<div class="t" style="left:435.50px;width:47.20px;text-align:center;top:160.61px;font-size:9.0px;color:#005C00;font-weight:bold;letter-spacing:0.30px;">Closed</div>
<div class="t" style="left:482.70px;width:91.10px;text-align:center;top:160.61px;font-size:9.0px;color:#005C00;letter-spacing:0.03px;">Resolution Confirmed</div>
<svg style="position:absolute;left:590.00px;top:161.04px" width="5" height="8"><path d="M2.75 0.3 L2.75 6.6" stroke="#222" stroke-width="1.6"/><path d="M2.50 0.6 L1.0 2.0" stroke="#444" stroke-width="0.9"/></svg>
<div class="t" style="left:55.00px;top:170.70px;font-size:9.0px;color:#222;letter-spacing:0.03px;">Create usage scenarios</div>
<div class="t" style="left:341.40px;top:171.10px;font-size:9.0px;color:#222;letter-spacing:0.03px;letter-spacing:-0.35px;">Plan</div>
<svg style="position:absolute;left:409px;top:171.83px" width="10" height="8"><path d="M2.8 0.3 V6.6" stroke="#666" stroke-width="1.1"/><path d="M6.3 0.3 V6.6" stroke="#222" stroke-width="1.2"/><path d="M5.9 0.6 L4.5 1.9" stroke="#444" stroke-width="0.9"/></svg>
<div class="t" style="left:435.50px;width:47.20px;text-align:center;top:171.40px;font-size:9.0px;color:#005C00;letter-spacing:0.03px;">Closed</div>
<div class="t" style="left:482.70px;width:91.10px;text-align:center;top:171.40px;font-size:9.0px;color:#005C00;letter-spacing:0.03px;">Resolution Confirmed</div>
<svg style="position:absolute;left:590.00px;top:171.83px" width="5" height="8"><path d="M2.97 0.3 L2.97 6.6" stroke="#222" stroke-width="1.15"/><path d="M2.72 0.6 L1.0 2.0" stroke="#444" stroke-width="0.9"/></svg>
<div class="t" style="left:611.60px;width:54.60px;text-align:center;top:171.70px;font-size:9.0px;color:#333399;font-weight:bold;letter-spacing:0.30px;">PG</div>
<div class="t" style="left:668.20px;top:171.20px;font-size:9.0px;color:#333399;font-weight:bold;letter-spacing:0.30px;text-decoration:underline;">Usage Scenarios</div>
<div class="t" style="left:775.70px;top:171.20px;font-size:9.0px;color:#333399;font-weight:bold;letter-spacing:0.30px;text-decoration:underline;">Scenarios&nbsp;</div>
<div class="t" style="left:55.00px;top:181.48px;font-size:9.0px;color:#222;letter-spacing:0.03px;">Build use cases</div>
<div class="t" style="left:341.40px;top:181.88px;font-size:9.0px;color:#222;letter-spacing:0.03px;letter-spacing:-0.35px;">Plan</div>
<svg style="position:absolute;left:409px;top:182.62px" width="10" height="8"><path d="M2.8 0.3 V6.6" stroke="#666" stroke-width="1.1"/><path d="M6.3 0.3 V6.6" stroke="#222" stroke-width="1.2"/><path d="M5.9 0.6 L4.5 1.9" stroke="#444" stroke-width="0.9"/></svg>
<div class="t" style="left:435.50px;width:47.20px;text-align:center;top:182.18px;font-size:9.0px;color:#005C00;letter-spacing:0.03px;">Closed</div>
<div class="t" style="left:482.70px;width:91.10px;text-align:center;top:182.18px;font-size:9.0px;color:#005C00;letter-spacing:0.03px;">Resolution Confirmed</div>
<svg style="position:absolute;left:590.00px;top:182.62px" width="5" height="8"><path d="M2.97 0.3 L2.97 6.6" stroke="#222" stroke-width="1.15"/><path d="M2.72 0.6 L1.0 2.0" stroke="#444" stroke-width="0.9"/></svg>
<div class="t" style="left:611.60px;width:54.60px;text-align:center;top:182.48px;font-size:9.0px;color:#333399;font-weight:bold;letter-spacing:0.30px;">PG</div>
<div class="t" style="left:55.00px;top:192.27px;font-size:9.0px;color:#222;letter-spacing:0.03px;">Document Solution Concept</div>
<div class="t" style="left:341.40px;top:192.67px;font-size:9.0px;color:#222;letter-spacing:0.03px;letter-spacing:-0.35px;">Plan</div>
<svg style="position:absolute;left:409px;top:193.40px" width="10" height="8"><path d="M2.8 0.3 V6.6" stroke="#666" stroke-width="1.1"/><path d="M6.3 0.3 V6.6" stroke="#222" stroke-width="1.2"/><path d="M5.9 0.6 L4.5 1.9" stroke="#444" stroke-width="0.9"/></svg>
<div class="t" style="left:435.50px;width:47.20px;text-align:center;top:192.97px;font-size:9.0px;color:#005C00;letter-spacing:0.03px;">Closed</div>
<div class="t" style="left:482.70px;width:91.10px;text-align:center;top:192.97px;font-size:9.0px;color:#005C00;letter-spacing:0.03px;">Resolution Confirmed</div>
<svg style="position:absolute;left:590.00px;top:193.40px" width="5" height="8"><path d="M2.97 0.3 L2.97 6.6" stroke="#222" stroke-width="1.15"/><path d="M2.72 0.6 L1.0 2.0" stroke="#444" stroke-width="0.9"/></svg>
<div class="t" style="left:611.60px;width:54.60px;text-align:center;top:193.27px;font-size:9.0px;color:#333399;font-weight:bold;letter-spacing:0.30px;">PG</div>
<div class="t" style="left:668.20px;top:192.77px;font-size:9.0px;color:#333399;font-weight:bold;letter-spacing:0.30px;text-decoration:underline;">Solution Concept</div>
<div class="t" style="left:25.00px;top:203.05px;font-size:9.0px;color:#000;font-weight:bold;letter-spacing:0.30px;">Design</div>
<div class="t" style="left:340.70px;top:203.75px;font-size:9.0px;color:#222;font-weight:bold;letter-spacing:0.30px;">Plan</div>
<svg style="position:absolute;left:409px;top:204.19px" width="10" height="8"><path d="M2.8 0.3 V6.6" stroke="#666" stroke-width="1.1"/><path d="M6.3 0.3 V6.6" stroke="#222" stroke-width="1.2"/><path d="M5.9 0.6 L4.5 1.9" stroke="#444" stroke-width="0.9"/></svg>
<div class="t" style="left:435.50px;width:47.20px;text-align:center;top:203.75px;font-size:9.0px;color:#4A3B00;letter-spacing:0.03px;">Resolved</div>
<div class="t" style="left:482.70px;width:91.10px;text-align:center;top:203.75px;font-size:9.0px;color:#4A3B00;letter-spacing:0.03px;">Fixed</div>
<svg style="position:absolute;left:590.00px;top:204.19px" width="5" height="8"><path d="M2.97 0.3 L2.97 6.6" stroke="#222" stroke-width="1.15"/><path d="M2.72 0.6 L1.0 2.0" stroke="#444" stroke-width="0.9"/></svg>
<div class="t" style="left:55.00px;top:213.84px;font-size:9.0px;color:#222;letter-spacing:0.03px;">Create architecture and design</div>
<div class="t" style="left:341.40px;top:214.24px;font-size:9.0px;color:#222;letter-spacing:0.03px;letter-spacing:-0.35px;">Plan</div>
<svg style="position:absolute;left:409px;top:214.97px" width="10" height="8"><path d="M2.8 0.3 V6.6" stroke="#666" stroke-width="1.1"/><path d="M6.3 0.3 V6.6" stroke="#222" stroke-width="1.2"/><path d="M5.9 0.6 L4.5 1.9" stroke="#444" stroke-width="0.9"/></svg>
<div class="t" style="left:435.50px;width:47.20px;text-align:center;top:214.54px;font-size:9.0px;color:#4A3B00;letter-spacing:0.03px;">Resolved</div>
<div class="t" style="left:482.70px;width:91.10px;text-align:center;top:214.54px;font-size:9.0px;color:#4A3B00;letter-spacing:0.03px;">Fixed</div>
<svg style="position:absolute;left:590.00px;top:214.97px" width="5" height="8"><path d="M2.97 0.3 L2.97 6.6" stroke="#222" stroke-width="1.15"/><path d="M2.72 0.6 L1.0 2.0" stroke="#444" stroke-width="0.9"/></svg>
<div class="t" style="left:611.60px;width:54.60px;text-align:center;top:214.84px;font-size:9.0px;color:#333399;font-weight:bold;letter-spacing:0.30px;">PG</div>
<div class="t" style="left:65.50px;top:224.63px;font-size:9.0px;color:#222;font-weight:bold;letter-spacing:0.22px;font-style:italic;">Design&nbsp; instore pick-up, store locator and inventory Services</div>
<div class="t" style="left:340.70px;top:225.33px;font-size:9.0px;color:#222;font-weight:bold;letter-spacing:0.30px;">Plan</div>
<svg style="position:absolute;left:409px;top:225.76px" width="10" height="8"><path d="M2.8 0.3 V6.6" stroke="#666" stroke-width="1.1"/><path d="M6.3 0.3 V6.6" stroke="#222" stroke-width="1.2"/><path d="M5.9 0.6 L4.5 1.9" stroke="#444" stroke-width="0.9"/></svg>
<div class="t" style="left:435.50px;width:47.20px;text-align:center;top:225.33px;font-size:9.0px;color:#4A3B00;letter-spacing:0.03px;">Resolved</div>
<div class="t" style="left:482.70px;width:91.10px;text-align:center;top:225.33px;font-size:9.0px;color:#4A3B00;letter-spacing:0.03px;">Fixed</div>
<svg style="position:absolute;left:590.00px;top:225.76px" width="5" height="8"><path d="M2.97 0.3 L2.97 6.6" stroke="#222" stroke-width="1.15"/><path d="M2.72 0.6 L1.0 2.0" stroke="#444" stroke-width="0.9"/></svg>
<div class="t" style="left:55.00px;top:235.41px;font-size:9.0px;color:#222;letter-spacing:0.03px;">Specify Features</div>
<div class="t" style="left:341.40px;top:235.81px;font-size:9.0px;color:#222;letter-spacing:0.03px;letter-spacing:-0.35px;">Plan</div>
<svg style="position:absolute;left:409px;top:236.55px" width="10" height="8"><path d="M2.8 0.3 V6.6" stroke="#666" stroke-width="1.1"/><path d="M6.3 0.3 V6.6" stroke="#222" stroke-width="1.2"/><path d="M5.9 0.6 L4.5 1.9" stroke="#444" stroke-width="0.9"/></svg>
<div class="t" style="left:435.50px;width:47.20px;text-align:center;top:236.11px;font-size:9.0px;color:#4A3B00;letter-spacing:0.03px;">Resolved</div>
<div class="t" style="left:482.70px;width:91.10px;text-align:center;top:236.11px;font-size:9.0px;color:#4A3B00;letter-spacing:0.03px;">Fixed</div>
<svg style="position:absolute;left:590.00px;top:236.55px" width="5" height="8"><path d="M2.97 0.3 L2.97 6.6" stroke="#222" stroke-width="1.15"/><path d="M2.72 0.6 L1.0 2.0" stroke="#444" stroke-width="0.9"/></svg>
<div class="t" style="left:611.60px;width:54.60px;text-align:center;top:236.41px;font-size:9.0px;color:#333399;font-weight:bold;letter-spacing:0.30px;">PG</div>
<div class="t" style="left:668.20px;top:235.91px;font-size:9.0px;color:#333399;font-weight:bold;letter-spacing:0.30px;text-decoration:underline;">Feature Specifications</div>
<div class="t" style="left:775.70px;top:235.91px;font-size:9.0px;color:#333399;font-weight:bold;letter-spacing:0.30px;text-decoration:underline;">Prioritzed&nbsp;</div>
<div class="t" style="left:55.00px;top:246.20px;font-size:9.0px;color:#222;letter-spacing:0.03px;">Estimate Schedule and Costs</div>
<div class="t" style="left:341.40px;top:246.60px;font-size:9.0px;color:#222;letter-spacing:0.03px;letter-spacing:-0.35px;">Plan</div>
<svg style="position:absolute;left:409px;top:247.33px" width="10" height="8"><path d="M2.8 0.3 V6.6" stroke="#666" stroke-width="1.1"/><path d="M6.3 0.3 V6.6" stroke="#222" stroke-width="1.2"/><path d="M5.9 0.6 L4.5 1.9" stroke="#444" stroke-width="0.9"/></svg>
<div class="t" style="left:435.50px;width:47.20px;text-align:center;top:246.90px;font-size:9.0px;color:#4A3B00;letter-spacing:0.03px;">Resolved</div>
<div class="t" style="left:482.70px;width:91.10px;text-align:center;top:246.90px;font-size:9.0px;color:#4A3B00;letter-spacing:0.03px;">Fixed</div>
<svg style="position:absolute;left:590.00px;top:247.33px" width="5" height="8"><path d="M2.97 0.3 L2.97 6.6" stroke="#222" stroke-width="1.15"/><path d="M2.72 0.6 L1.0 2.0" stroke="#444" stroke-width="0.9"/></svg>
<div class="t" style="left:611.60px;width:54.60px;text-align:center;top:247.20px;font-size:9.0px;color:#333399;font-weight:bold;letter-spacing:0.30px;">PG</div>
<div class="t" style="left:668.20px;top:246.70px;font-size:9.0px;color:#333399;font-weight:bold;letter-spacing:0.30px;text-decoration:underline;">Risk Driven Schedule&nbsp;</div>
<div class="t" style="left:775.70px;top:246.70px;font-size:9.0px;color:#333399;font-weight:bold;letter-spacing:0.30px;text-decoration:underline;">Milestone&nbsp;</div>
<div class="t" style="left:25.00px;top:256.98px;font-size:9.0px;color:#000;font-weight:bold;letter-spacing:0.30px;">Develop</div>
<div class="t" style="left:340.70px;top:257.68px;font-size:9.0px;color:#222;font-weight:bold;letter-spacing:0.55px;">Implement</div>
<svg style="position:absolute;left:409px;top:258.12px" width="10" height="8"><path d="M2.8 0.3 V6.6" stroke="#666" stroke-width="1.1"/><path d="M6.3 0.3 V6.6" stroke="#222" stroke-width="1.2"/><path d="M5.9 0.6 L4.5 1.9" stroke="#444" stroke-width="0.9"/></svg>
<div class="t" style="left:435.50px;width:47.20px;text-align:center;top:257.68px;font-size:9.0px;color:#4A3B00;letter-spacing:0.03px;">Resolved</div>
<div class="t" style="left:482.70px;width:91.10px;text-align:center;top:257.68px;font-size:9.0px;color:#4A3B00;letter-spacing:0.03px;">Fixed</div>
<svg style="position:absolute;left:590.00px;top:258.12px" width="5" height="8"><path d="M2.97 0.3 L2.97 6.6" stroke="#222" stroke-width="1.15"/><path d="M2.72 0.6 L1.0 2.0" stroke="#444" stroke-width="0.9"/></svg>
<div class="t" style="left:55.00px;top:267.77px;font-size:9.0px;color:#222;letter-spacing:0.03px;">Code Features</div>
<div class="t" style="left:341.40px;top:268.17px;font-size:9.0px;color:#222;letter-spacing:0.03px;letter-spacing:-0.38px;">Implement</div>
<svg style="position:absolute;left:409px;top:268.90px" width="10" height="8"><path d="M2.8 0.3 V6.6" stroke="#666" stroke-width="1.1"/><path d="M6.3 0.3 V6.6" stroke="#222" stroke-width="1.2"/><path d="M5.9 0.6 L4.5 1.9" stroke="#444" stroke-width="0.9"/></svg>
<div class="t" style="left:435.50px;width:47.20px;text-align:center;top:268.47px;font-size:9.0px;color:#4A3B00;letter-spacing:0.03px;">Resolved</div>
<div class="t" style="left:482.70px;width:91.10px;text-align:center;top:268.47px;font-size:9.0px;color:#4A3B00;letter-spacing:0.03px;">Fixed</div>
<svg style="position:absolute;left:590.00px;top:268.90px" width="5" height="8"><path d="M2.97 0.3 L2.97 6.6" stroke="#222" stroke-width="1.15"/><path d="M2.72 0.6 L1.0 2.0" stroke="#444" stroke-width="0.9"/></svg>
<div class="t" style="left:611.60px;width:54.60px;text-align:center;top:268.77px;font-size:9.0px;color:#333399;font-weight:bold;letter-spacing:0.30px;">PG</div>
<div class="t" style="left:775.70px;top:268.27px;font-size:9.0px;color:#333399;font-weight:bold;letter-spacing:0.30px;text-decoration:underline;">Workload&nbsp;</div>
<div class="t" style="left:65.50px;top:278.56px;font-size:9.0px;color:#222;font-weight:bold;letter-spacing:0.22px;font-style:italic;">Implement Business Logic for Find Store</div>
<div class="t" style="left:340.70px;top:279.26px;font-size:9.0px;color:#222;font-weight:bold;letter-spacing:0.55px;">Implement</div>
<svg style="position:absolute;left:409px;top:279.69px" width="10" height="8"><path d="M2.8 0.3 V6.6" stroke="#666" stroke-width="1.1"/><path d="M6.3 0.3 V6.6" stroke="#222" stroke-width="1.2"/><path d="M5.9 0.6 L4.5 1.9" stroke="#444" stroke-width="0.9"/></svg>
<div class="t" style="left:435.50px;width:47.20px;text-align:center;top:279.26px;font-size:9.0px;color:#4A3B00;letter-spacing:0.03px;">Resolved</div>
<div class="t" style="left:482.70px;width:91.10px;text-align:center;top:279.26px;font-size:9.0px;color:#4A3B00;letter-spacing:0.03px;">Fixed</div>
<svg style="position:absolute;left:590.00px;top:279.69px" width="5" height="8"><path d="M2.97 0.3 L2.97 6.6" stroke="#222" stroke-width="1.15"/><path d="M2.72 0.6 L1.0 2.0" stroke="#444" stroke-width="0.9"/></svg>
<div class="t" style="left:55.00px;top:289.34px;font-size:9.0px;color:#222;letter-spacing:0.03px;">Unit Test Features</div>
<div class="t" style="left:341.40px;top:289.74px;font-size:9.0px;color:#222;letter-spacing:0.03px;letter-spacing:-0.38px;">Implement</div>
<svg style="position:absolute;left:409px;top:290.48px" width="10" height="8"><path d="M2.8 0.3 V6.6" stroke="#666" stroke-width="1.1"/><path d="M6.3 0.3 V6.6" stroke="#222" stroke-width="1.2"/><path d="M5.9 0.6 L4.5 1.9" stroke="#444" stroke-width="0.9"/></svg>
<div class="t" style="left:435.50px;width:47.20px;text-align:center;top:290.04px;font-size:9.0px;color:#4A3B00;letter-spacing:0.03px;">Resolved</div>
<div class="t" style="left:482.70px;width:91.10px;text-align:center;top:290.04px;font-size:9.0px;color:#4A3B00;letter-spacing:0.03px;">Fixed</div>
<svg style="position:absolute;left:590.00px;top:290.48px" width="5" height="8"><path d="M2.97 0.3 L2.97 6.6" stroke="#222" stroke-width="1.15"/><path d="M2.72 0.6 L1.0 2.0" stroke="#444" stroke-width="0.9"/></svg>
<div class="t" style="left:611.60px;width:54.60px;text-align:center;top:290.34px;font-size:9.0px;color:#333399;font-weight:bold;letter-spacing:0.30px;">PG</div>
<div class="t" style="left:775.70px;top:289.84px;font-size:9.0px;color:#333399;font-weight:bold;letter-spacing:0.30px;text-decoration:underline;">Stress Test&nbsp;</div>
<div class="t" style="left:55.00px;top:300.13px;font-size:9.0px;color:#222;letter-spacing:0.03px;">Refactor Features</div>
<div class="t" style="left:341.40px;top:300.53px;font-size:9.0px;color:#222;letter-spacing:0.03px;letter-spacing:-0.38px;">Implement</div>
<svg style="position:absolute;left:409px;top:301.26px" width="10" height="8"><path d="M2.8 0.3 V6.6" stroke="#666" stroke-width="1.1"/><path d="M6.3 0.3 V6.6" stroke="#222" stroke-width="1.2"/><path d="M5.9 0.6 L4.5 1.9" stroke="#444" stroke-width="0.9"/></svg>
<div class="t" style="left:435.50px;width:47.20px;text-align:center;top:300.83px;font-size:9.0px;color:#4A3B00;letter-spacing:0.03px;">Resolved</div>
<div class="t" style="left:482.70px;width:91.10px;text-align:center;top:300.83px;font-size:9.0px;color:#4A3B00;letter-spacing:0.03px;">Fixed</div>
<svg style="position:absolute;left:590.00px;top:301.26px" width="5" height="8"><path d="M2.97 0.3 L2.97 6.6" stroke="#222" stroke-width="1.15"/><path d="M2.72 0.6 L1.0 2.0" stroke="#444" stroke-width="0.9"/></svg>
<div class="t" style="left:611.60px;width:54.60px;text-align:center;top:301.13px;font-size:9.0px;color:#333399;font-weight:bold;letter-spacing:0.30px;">PG</div>
<div class="t" style="left:775.70px;top:300.63px;font-size:9.0px;color:#333399;font-weight:bold;letter-spacing:0.30px;text-decoration:underline;">Code&nbsp;</div>
<div class="t" style="left:25.00px;top:310.91px;font-size:9.0px;color:#000;font-weight:bold;letter-spacing:0.30px;">Test</div>
<div class="t" style="left:340.70px;top:311.61px;font-size:9.0px;color:#222;font-weight:bold;letter-spacing:0.55px;">Implement</div>
<svg style="position:absolute;left:409px;top:312.05px" width="10" height="8"><path d="M2.8 0.3 V6.6" stroke="#666" stroke-width="1.1"/><path d="M6.3 0.3 V6.6" stroke="#222" stroke-width="1.2"/><path d="M5.9 0.6 L4.5 1.9" stroke="#444" stroke-width="0.9"/></svg>
<div class="t" style="left:435.50px;width:47.20px;text-align:center;top:311.61px;font-size:9.0px;color:#4A3B00;font-weight:bold;letter-spacing:0.30px;">Resolved</div>
<div class="t" style="left:482.70px;width:91.10px;text-align:center;top:311.61px;font-size:9.0px;color:#4A3B00;letter-spacing:0.03px;">Fixed</div>
<svg style="position:absolute;left:590.00px;top:312.05px" width="5" height="8"><path d="M2.75 0.3 L2.75 6.6" stroke="#222" stroke-width="1.6"/><path d="M2.50 0.6 L1.0 2.0" stroke="#444" stroke-width="0.9"/></svg>
<div class="t" style="left:55.00px;top:321.70px;font-size:9.0px;color:#222;letter-spacing:0.03px;">Write Test cases</div>
<div class="t" style="left:341.40px;top:322.10px;font-size:9.0px;color:#222;letter-spacing:0.03px;letter-spacing:-0.38px;">Implement</div>
<svg style="position:absolute;left:409px;top:322.83px" width="10" height="8"><path d="M2.8 0.3 V6.6" stroke="#666" stroke-width="1.1"/><path d="M6.3 0.3 V6.6" stroke="#222" stroke-width="1.2"/><path d="M5.9 0.6 L4.5 1.9" stroke="#444" stroke-width="0.9"/></svg>
<div class="t" style="left:435.50px;width:47.20px;text-align:center;top:322.40px;font-size:9.0px;color:#4A3B00;letter-spacing:0.03px;">Resolved</div>
<div class="t" style="left:482.70px;width:91.10px;text-align:center;top:322.40px;font-size:9.0px;color:#4A3B00;letter-spacing:0.03px;">Fixed</div>
<svg style="position:absolute;left:590.00px;top:322.83px" width="5" height="8"><path d="M2.97 0.3 L2.97 6.6" stroke="#222" stroke-width="1.15"/><path d="M2.72 0.6 L1.0 2.0" stroke="#444" stroke-width="0.9"/></svg>
<div class="t" style="left:611.60px;width:54.60px;text-align:center;top:322.70px;font-size:9.0px;color:#333399;font-weight:bold;letter-spacing:0.30px;">PG</div>
<div class="t" style="left:775.70px;top:322.20px;font-size:9.0px;color:#333399;font-weight:bold;letter-spacing:0.30px;text-decoration:underline;">Workload&nbsp;</div>
<div class="t" style="left:55.00px;top:332.49px;font-size:9.0px;color:#222;letter-spacing:0.03px;">Complete Test Passes (all other in-depth tests)</div>
<div class="t" style="left:341.40px;top:332.89px;font-size:9.0px;color:#222;letter-spacing:0.03px;letter-spacing:-0.38px;">Implement</div>
<svg style="position:absolute;left:409px;top:333.62px" width="10" height="8"><path d="M2.8 0.3 V6.6" stroke="#666" stroke-width="1.1"/><path d="M6.3 0.3 V6.6" stroke="#222" stroke-width="1.2"/><path d="M5.9 0.6 L4.5 1.9" stroke="#444" stroke-width="0.9"/></svg>
<div class="t" style="left:435.50px;width:47.20px;text-align:center;top:333.19px;font-size:9.0px;color:#4A3B00;letter-spacing:0.03px;">Resolved</div>
<div class="t" style="left:482.70px;width:91.10px;text-align:center;top:333.19px;font-size:9.0px;color:#4A3B00;letter-spacing:0.03px;">Fixed</div>
<svg style="position:absolute;left:590.00px;top:333.62px" width="5" height="8"><path d="M2.97 0.3 L2.97 6.6" stroke="#222" stroke-width="1.15"/><path d="M2.72 0.6 L1.0 2.0" stroke="#444" stroke-width="0.9"/></svg>
<div class="t" style="left:611.60px;width:54.60px;text-align:center;top:333.49px;font-size:9.0px;color:#333399;font-weight:bold;letter-spacing:0.30px;">PG</div>
<div class="t" style="left:775.70px;top:332.99px;font-size:9.0px;color:#333399;font-weight:bold;letter-spacing:0.30px;text-decoration:underline;">Daily Build&nbsp;</div>
<div class="t" style="left:65.50px;top:343.27px;font-size:9.0px;color:#222;font-weight:bold;letter-spacing:0.22px;font-style:italic;">Run Load Test on Lab Configuration</div>
<div class="t" style="left:340.70px;top:343.97px;font-size:9.0px;color:#222;font-weight:bold;letter-spacing:0.55px;">Implement</div>
<div class="t" style="left:435.50px;width:47.20px;text-align:center;top:343.97px;font-size:9.0px;color:#4A3B00;letter-spacing:0.03px;">Resolved</div>
<div class="t" style="left:482.70px;width:91.10px;text-align:center;top:343.97px;font-size:9.0px;color:#4A3B00;letter-spacing:0.03px;">Fixed</div>
<svg style="position:absolute;left:590.00px;top:344.41px" width="5" height="8"><path d="M2.97 0.3 L2.97 6.6" stroke="#222" stroke-width="1.15"/><path d="M2.72 0.6 L1.0 2.0" stroke="#444" stroke-width="0.9"/></svg>
<div class="t" style="left:55.00px;top:354.06px;font-size:9.0px;color:#222;letter-spacing:0.03px;">Resolve Bugs</div>
<div class="t" style="left:341.40px;top:354.46px;font-size:9.0px;color:#222;letter-spacing:0.03px;letter-spacing:-0.38px;">Implement</div>
<svg style="position:absolute;left:409px;top:355.19px" width="10" height="8"><path d="M2.8 0.3 V6.6" stroke="#666" stroke-width="1.1"/><path d="M6.3 0.3 V6.6" stroke="#222" stroke-width="1.2"/><path d="M5.9 0.6 L4.5 1.9" stroke="#444" stroke-width="0.9"/></svg>
<div class="t" style="left:435.50px;width:47.20px;text-align:center;top:354.76px;font-size:9.0px;color:#4A3B00;letter-spacing:0.03px;">Resolved</div>
<div class="t" style="left:482.70px;width:91.10px;text-align:center;top:354.76px;font-size:9.0px;color:#4A3B00;letter-spacing:0.03px;">Fixed</div>
<svg style="position:absolute;left:590.00px;top:355.19px" width="5" height="8"><path d="M2.97 0.3 L2.97 6.6" stroke="#222" stroke-width="1.15"/><path d="M2.72 0.6 L1.0 2.0" stroke="#444" stroke-width="0.9"/></svg>
<div class="t" style="left:611.60px;width:54.60px;text-align:center;top:355.06px;font-size:9.0px;color:#333399;font-weight:bold;letter-spacing:0.30px;">PG</div>
<div class="t" style="left:775.70px;top:354.56px;font-size:9.0px;color:#333399;font-weight:bold;letter-spacing:0.30px;text-decoration:underline;">Resolved&nbsp;</div>
<div class="t" style="left:25.00px;top:364.84px;font-size:9.0px;color:#000;font-weight:bold;letter-spacing:0.30px;">Stabilize</div>
<div class="t" style="left:340.70px;top:365.54px;font-size:9.0px;color:#222;font-weight:bold;letter-spacing:0.55px;">Implement</div>
<svg style="position:absolute;left:409px;top:365.98px" width="10" height="8"><path d="M2.8 0.3 V6.6" stroke="#666" stroke-width="1.1"/><path d="M6.3 0.3 V6.6" stroke="#222" stroke-width="1.2"/><path d="M5.9 0.6 L4.5 1.9" stroke="#444" stroke-width="0.9"/></svg>
<div class="t" style="left:435.50px;width:47.20px;text-align:center;top:365.54px;font-size:9.0px;color:#4A3B00;letter-spacing:0.03px;">Resolved</div>
<div class="t" style="left:482.70px;width:91.10px;text-align:center;top:365.54px;font-size:9.0px;color:#4A3B00;letter-spacing:0.03px;">Fixed</div>
<svg style="position:absolute;left:590.00px;top:365.98px" width="5" height="8"><path d="M2.97 0.3 L2.97 6.6" stroke="#222" stroke-width="1.15"/><path d="M2.72 0.6 L1.0 2.0" stroke="#444" stroke-width="0.9"/></svg>
<div class="t" style="left:55.00px;top:375.63px;font-size:9.0px;color:#222;letter-spacing:0.03px;">Perform Integration Testing</div>
<div class="t" style="left:341.40px;top:376.03px;font-size:9.0px;color:#222;letter-spacing:0.03px;letter-spacing:-0.38px;">Implement</div>
<svg style="position:absolute;left:409px;top:376.76px" width="10" height="8"><path d="M2.8 0.3 V6.6" stroke="#666" stroke-width="1.1"/><path d="M6.3 0.3 V6.6" stroke="#222" stroke-width="1.2"/><path d="M5.9 0.6 L4.5 1.9" stroke="#444" stroke-width="0.9"/></svg>
<div class="t" style="left:435.50px;width:47.20px;text-align:center;top:376.33px;font-size:9.0px;color:#4A3B00;letter-spacing:0.03px;">Resolved</div>
<div class="t" style="left:482.70px;width:91.10px;text-align:center;top:376.33px;font-size:9.0px;color:#4A3B00;letter-spacing:0.03px;">Fixed</div>
<svg style="position:absolute;left:590.00px;top:376.76px" width="5" height="8"><path d="M2.97 0.3 L2.97 6.6" stroke="#222" stroke-width="1.15"/><path d="M2.72 0.6 L1.0 2.0" stroke="#444" stroke-width="0.9"/></svg>
<div class="t" style="left:668.20px;top:376.13px;font-size:9.0px;color:#333399;font-weight:bold;letter-spacing:0.30px;text-decoration:underline;">Bug Convergence</div>
<div class="t" style="left:55.00px;top:386.42px;font-size:9.0px;color:#222;letter-spacing:0.03px;">Reach ZBB</div>
<div class="t" style="left:341.40px;top:386.82px;font-size:9.0px;color:#222;letter-spacing:0.03px;letter-spacing:-0.38px;">Implement</div>
<svg style="position:absolute;left:409px;top:387.55px" width="10" height="8"><path d="M2.8 0.3 V6.6" stroke="#666" stroke-width="1.1"/><path d="M6.3 0.3 V6.6" stroke="#222" stroke-width="1.2"/><path d="M5.9 0.6 L4.5 1.9" stroke="#444" stroke-width="0.9"/></svg>
<div class="t" style="left:435.50px;width:47.20px;text-align:center;top:387.12px;font-size:9.0px;color:#4A3B00;letter-spacing:0.03px;">Resolved</div>
<div class="t" style="left:482.70px;width:91.10px;text-align:center;top:387.12px;font-size:9.0px;color:#4A3B00;letter-spacing:0.03px;">Fixed</div>
<svg style="position:absolute;left:590.00px;top:387.55px" width="5" height="8"><path d="M2.97 0.3 L2.97 6.6" stroke="#222" stroke-width="1.15"/><path d="M2.72 0.6 L1.0 2.0" stroke="#444" stroke-width="0.9"/></svg>
<div class="t" style="left:611.60px;width:54.60px;text-align:center;top:387.42px;font-size:9.0px;color:#333399;font-weight:bold;letter-spacing:0.30px;">PG</div>
<div class="t" style="left:668.20px;top:386.92px;font-size:9.0px;color:#333399;font-weight:bold;letter-spacing:0.30px;text-decoration:underline;">ZBB Trend</div>
<div class="t" style="left:55.00px;top:397.20px;font-size:9.0px;color:#222;font-weight:bold;letter-spacing:0.22px;font-style:italic;">Final Customer Acceptance Test</div>
<div class="t" style="left:340.70px;top:397.90px;font-size:9.0px;color:#222;font-weight:bold;letter-spacing:0.55px;">Implement</div>
<svg style="position:absolute;left:409px;top:398.34px" width="10" height="8"><path d="M2.8 0.3 V6.6" stroke="#666" stroke-width="1.1"/><path d="M6.3 0.3 V6.6" stroke="#222" stroke-width="1.2"/><path d="M5.9 0.6 L4.5 1.9" stroke="#444" stroke-width="0.9"/></svg>
<div class="t" style="left:435.50px;width:47.20px;text-align:center;top:397.90px;font-size:9.0px;color:#6A0000;letter-spacing:0.03px;">Active</div>
<svg style="position:absolute;left:590.00px;top:398.34px" width="5" height="8"><path d="M2.97 0.3 L2.97 6.6" stroke="#222" stroke-width="1.15"/><path d="M2.72 0.6 L1.0 2.0" stroke="#444" stroke-width="0.9"/></svg>
<div class="t" style="left:25.00px;top:407.99px;font-size:9.0px;color:#000;font-weight:bold;letter-spacing:0.30px;">Release</div>
<div class="t" style="left:340.70px;top:408.69px;font-size:9.0px;color:#222;font-weight:bold;letter-spacing:0.30px;">Deploy</div>
<svg style="position:absolute;left:409px;top:409.12px" width="10" height="8"><path d="M2.8 0.3 V6.6" stroke="#666" stroke-width="1.1"/><path d="M6.3 0.3 V6.6" stroke="#222" stroke-width="1.2"/><path d="M5.9 0.6 L4.5 1.9" stroke="#444" stroke-width="0.9"/></svg>
<div class="t" style="left:435.50px;width:47.20px;text-align:center;top:408.69px;font-size:9.0px;color:#6A0000;font-weight:bold;letter-spacing:0.30px;">Active</div>
<svg style="position:absolute;left:590.00px;top:409.12px" width="5" height="8"><path d="M2.97 0.3 L2.97 6.6" stroke="#222" stroke-width="1.15"/><path d="M2.72 0.6 L1.0 2.0" stroke="#444" stroke-width="0.9"/></svg>
<div class="t" style="left:55.00px;top:418.77px;font-size:9.0px;color:#222;letter-spacing:0.03px;">Identify Release candidates</div>
<div class="t" style="left:341.40px;top:419.17px;font-size:9.0px;color:#222;letter-spacing:0.03px;letter-spacing:-0.05px;">Deploy</div>
<svg style="position:absolute;left:409px;top:419.91px" width="10" height="8"><path d="M2.8 0.3 V6.6" stroke="#666" stroke-width="1.1"/><path d="M6.3 0.3 V6.6" stroke="#222" stroke-width="1.2"/><path d="M5.9 0.6 L4.5 1.9" stroke="#444" stroke-width="0.9"/></svg>
<div class="t" style="left:435.50px;width:47.20px;text-align:center;top:419.47px;font-size:9.0px;color:#6A0000;letter-spacing:0.03px;">Active</div>
<svg style="position:absolute;left:590.00px;top:419.91px" width="5" height="8"><path d="M2.97 0.3 L2.97 6.6" stroke="#222" stroke-width="1.15"/><path d="M2.72 0.6 L1.0 2.0" stroke="#444" stroke-width="0.9"/></svg>
<div class="t" style="left:55.00px;top:429.56px;font-size:9.0px;color:#222;letter-spacing:0.03px;">Release to Production</div>
<div class="t" style="left:341.40px;top:429.96px;font-size:9.0px;color:#222;letter-spacing:0.03px;letter-spacing:-0.05px;">Deploy</div>
<svg style="position:absolute;left:409px;top:430.69px" width="10" height="8"><path d="M2.8 0.3 V6.6" stroke="#666" stroke-width="1.1"/><path d="M6.3 0.3 V6.6" stroke="#222" stroke-width="1.2"/><path d="M5.9 0.6 L4.5 1.9" stroke="#444" stroke-width="0.9"/></svg>
<div class="t" style="left:435.50px;width:47.20px;text-align:center;top:430.26px;font-size:9.0px;color:#6A0000;letter-spacing:0.03px;">Active</div>
<svg style="position:absolute;left:590.00px;top:430.69px" width="5" height="8"><path d="M2.97 0.3 L2.97 6.6" stroke="#222" stroke-width="1.15"/><path d="M2.72 0.6 L1.0 2.0" stroke="#444" stroke-width="0.9"/></svg>
<div class="t" style="left:611.60px;width:54.60px;text-align:center;top:430.56px;font-size:9.0px;color:#333399;font-weight:bold;letter-spacing:0.30px;">PG</div>
<div class="t" style="left:668.20px;top:430.06px;font-size:9.0px;color:#333399;font-weight:bold;letter-spacing:0.30px;text-decoration:underline;">Release Signoff Form</div>
<div class="t" style="left:25.00px;top:440.35px;font-size:9.0px;color:#000;font-weight:bold;letter-spacing:0.30px;">Transition</div>
<div class="t" style="left:340.70px;top:441.05px;font-size:9.0px;color:#222;font-weight:bold;letter-spacing:0.30px;">Deploy</div>
<svg style="position:absolute;left:409px;top:441.48px" width="10" height="8"><path d="M2.8 0.3 V6.6" stroke="#666" stroke-width="1.1"/><path d="M6.3 0.3 V6.6" stroke="#222" stroke-width="1.2"/><path d="M5.9 0.6 L4.5 1.9" stroke="#444" stroke-width="0.9"/></svg>
<svg style="position:absolute;left:590.00px;top:441.48px" width="5" height="8"><path d="M2.97 0.3 L2.97 6.6" stroke="#222" stroke-width="1.15"/><path d="M2.72 0.6 L1.0 2.0" stroke="#444" stroke-width="0.9"/></svg>
<div class="t" style="left:55.00px;top:451.13px;font-size:9.0px;color:#222;letter-spacing:0.03px;">Complete final documentation</div>
<div class="t" style="left:341.40px;top:451.53px;font-size:9.0px;color:#222;letter-spacing:0.03px;letter-spacing:-0.05px;">Deploy</div>
<svg style="position:absolute;left:409px;top:452.27px" width="10" height="8"><path d="M2.8 0.3 V6.6" stroke="#666" stroke-width="1.1"/><path d="M6.3 0.3 V6.6" stroke="#222" stroke-width="1.2"/><path d="M5.9 0.6 L4.5 1.9" stroke="#444" stroke-width="0.9"/></svg>
<div class="t" style="left:435.50px;width:47.20px;text-align:center;top:451.83px;font-size:9.0px;color:#6A0000;letter-spacing:0.03px;">Active</div>
<svg style="position:absolute;left:590.00px;top:452.27px" width="5" height="8"><path d="M2.97 0.3 L2.97 6.6" stroke="#222" stroke-width="1.15"/><path d="M2.72 0.6 L1.0 2.0" stroke="#444" stroke-width="0.9"/></svg>
<div class="t" style="left:611.60px;width:54.60px;text-align:center;top:452.13px;font-size:9.0px;color:#333399;font-weight:bold;letter-spacing:0.30px;">PG</div>
<div class="t" style="left:55.00px;top:461.92px;font-size:9.0px;color:#222;letter-spacing:0.03px;">Transfer to operations</div>
<div class="t" style="left:341.40px;top:462.32px;font-size:9.0px;color:#222;letter-spacing:0.03px;letter-spacing:-0.05px;">Deploy</div>
<svg style="position:absolute;left:409px;top:463.05px" width="10" height="8"><path d="M2.8 0.3 V6.6" stroke="#666" stroke-width="1.1"/><path d="M6.3 0.3 V6.6" stroke="#222" stroke-width="1.2"/><path d="M5.9 0.6 L4.5 1.9" stroke="#444" stroke-width="0.9"/></svg>
<div class="t" style="left:435.50px;width:47.20px;text-align:center;top:462.62px;font-size:9.0px;color:#6A0000;letter-spacing:0.03px;">Active</div>
<svg style="position:absolute;left:590.00px;top:463.05px" width="5" height="8"><path d="M2.97 0.3 L2.97 6.6" stroke="#222" stroke-width="1.15"/><path d="M2.72 0.6 L1.0 2.0" stroke="#444" stroke-width="0.9"/></svg>
<div class="t" style="left:611.60px;width:54.60px;text-align:center;top:462.92px;font-size:9.0px;color:#333399;font-weight:bold;letter-spacing:0.30px;">PG</div>
<div class="t" style="left:25.00px;top:472.70px;font-size:9.0px;color:#000;font-weight:bold;letter-spacing:0.30px;">Closeout</div>
<div class="t" style="left:340.70px;top:473.40px;font-size:9.0px;color:#222;font-weight:bold;letter-spacing:0.30px;">Deploy</div>
<svg style="position:absolute;left:409px;top:473.84px" width="10" height="8"><path d="M2.8 0.3 V6.6" stroke="#666" stroke-width="1.1"/><path d="M6.3 0.3 V6.6" stroke="#222" stroke-width="1.2"/><path d="M5.9 0.6 L4.5 1.9" stroke="#444" stroke-width="0.9"/></svg>
<svg style="position:absolute;left:590.00px;top:473.84px" width="5" height="8"><path d="M2.97 0.3 L2.97 6.6" stroke="#222" stroke-width="1.15"/><path d="M2.72 0.6 L1.0 2.0" stroke="#444" stroke-width="0.9"/></svg>
<div class="t" style="left:55.00px;top:483.49px;font-size:9.0px;color:#222;letter-spacing:0.03px;">Obtain customer approval</div>
<div class="t" style="left:341.40px;top:483.89px;font-size:9.0px;color:#222;letter-spacing:0.03px;letter-spacing:-0.05px;">Deploy</div>
<svg style="position:absolute;left:409px;top:484.62px" width="10" height="8"><path d="M2.8 0.3 V6.6" stroke="#666" stroke-width="1.1"/><path d="M6.3 0.3 V6.6" stroke="#222" stroke-width="1.2"/><path d="M5.9 0.6 L4.5 1.9" stroke="#444" stroke-width="0.9"/></svg>
<div class="t" style="left:435.50px;width:47.20px;text-align:center;top:484.19px;font-size:9.0px;color:#6A0000;letter-spacing:0.03px;">Active</div>
<svg style="position:absolute;left:590.00px;top:484.62px" width="5" height="8"><path d="M2.97 0.3 L2.97 6.6" stroke="#222" stroke-width="1.15"/><path d="M2.72 0.6 L1.0 2.0" stroke="#444" stroke-width="0.9"/></svg>
<div class="t" style="left:611.60px;width:54.60px;text-align:center;top:484.49px;font-size:9.0px;color:#333399;font-weight:bold;letter-spacing:0.30px;">PG</div>
<div class="t" style="left:55.00px;top:494.28px;font-size:9.0px;color:#222;letter-spacing:0.03px;">Post Project Review</div>
<div class="t" style="left:341.40px;top:494.68px;font-size:9.0px;color:#222;letter-spacing:0.03px;letter-spacing:-0.05px;">Deploy</div>
<svg style="position:absolute;left:409px;top:495.41px" width="10" height="8"><path d="M2.8 0.3 V6.6" stroke="#666" stroke-width="1.1"/><path d="M6.3 0.3 V6.6" stroke="#222" stroke-width="1.2"/><path d="M5.9 0.6 L4.5 1.9" stroke="#444" stroke-width="0.9"/></svg>
<div class="t" style="left:435.50px;width:47.20px;text-align:center;top:494.98px;font-size:9.0px;color:#6A0000;letter-spacing:0.03px;">Active</div>
<svg style="position:absolute;left:590.00px;top:495.41px" width="5" height="8"><path d="M2.97 0.3 L2.97 6.6" stroke="#222" stroke-width="1.15"/><path d="M2.72 0.6 L1.0 2.0" stroke="#444" stroke-width="0.9"/></svg>
<div class="t" style="left:611.60px;width:54.60px;text-align:center;top:495.28px;font-size:9.0px;color:#333399;font-weight:bold;letter-spacing:0.30px;">PG</div>
<div class="t" style="left:668.20px;top:494.78px;font-size:9.0px;color:#333399;font-weight:bold;letter-spacing:0.30px;">Post Project Analysis</div>
<div style="position:absolute;left:23.20px;top:92.20px;width:810.80px;height:411.90px;border:1.2px solid #38387E;border-top:2px solid #2A0A5A;border-left-color:#201A60;"></div>
<div style="position:absolute;left:434.75px;top:504.30px;width:1.50px;height:78.10px;background:#111;"></div>
<div style="position:absolute;left:832.50px;top:515.08px;width:1.50px;height:67.32px;background:#111;"></div>
<div style="position:absolute;left:23.00px;top:513.88px;width:317.00px;height:17.40px;border:2.2px solid #000;"></div>
<div style="position:absolute;left:336.20px;top:527.78px;width:5.50px;height:5.50px;background:#000;border-left:1px solid #fff;border-top:1px solid #fff;"></div>
<div style="position:absolute;left:834.00px;top:84.00px;width:16.00px;height:498.40px;background:#FAFAF7;"></div>
<div style="position:absolute;left:835.00px;top:85.00px;width:13.00px;height:12.00px;background:linear-gradient(135deg,#DDE8FC,#B8CEF4);border:1px solid #fff;border-radius:2px;"></div>
<svg style="position:absolute;left:837px;top:87px" width="9" height="7"><path d="M1 5.5 L4.5 2 L8 5.5" stroke="#4D6185" stroke-width="1.8" fill="none"/></svg>
<div style="position:absolute;left:835.00px;top:97.00px;width:13.00px;height:96.50px;background:linear-gradient(90deg,#C6D7F8,#BACFF6);border:1px solid #fff;border-radius:2px;"></div>
<div style="position:absolute;left:838.50px;top:142.50px;width:6.00px;height:1.00px;background:#8EA8DA;"></div>
<div style="position:absolute;left:838.50px;top:144.50px;width:6.00px;height:1.00px;background:#8EA8DA;"></div>
<div style="position:absolute;left:838.50px;top:146.50px;width:6.00px;height:1.00px;background:#8EA8DA;"></div>
<div style="position:absolute;left:838.50px;top:148.50px;width:6.00px;height:1.00px;background:#8EA8DA;"></div>
<div style="position:absolute;left:835.00px;top:569.00px;width:13.00px;height:12.50px;background:linear-gradient(135deg,#DDE8FC,#B8CEF4);border:1px solid #fff;border-radius:2px;"></div>
<svg style="position:absolute;left:837px;top:572px" width="9" height="7"><path d="M1 1.5 L4.5 5 L8 1.5" stroke="#4D6185" stroke-width="1.8" fill="none"/></svg>
<div style="position:absolute;left:848.00px;top:78.00px;width:2.00px;height:504.40px;background:#E8E8E8;"></div>
<div style="position:absolute;left:0.00px;top:582.40px;width:850.00px;height:13.50px;background:#ECE9D8;border-top:1px solid #C8C5B8;"></div>
<div style="position:absolute;left:0.00px;top:582.40px;width:2.00px;height:13.50px;background:#A0A0A0;"></div>
<svg style="position:absolute;left:4px;top:584px" width="50" height="11"><path d="M0.8 1.8 v6.5" stroke="#000" stroke-width="1.4"/><path d="M5.4 1.8 L1.6 5 L5.4 8.3 Z" fill="#000"/><path d="M18.9 1.8 L14.9 5 L18.9 8.3 Z" fill="#000"/><path d="M28.1 1.8 L32 5 L28.1 8.3 Z" fill="#000"/><path d="M41.2 1.8 L45.2 5 L41.2 8.3 Z" fill="#000"/><path d="M46.4 1.8 v6.5" stroke="#000" stroke-width="1.4"/></svg>
<div style="position:absolute;left:53.50px;top:583.00px;width:1.00px;height:12.00px;background:#B0AC9C;"></div>
<svg style="position:absolute;left:0px;top:580px" width="300" height="18"><path d="M55.4 3 L91.7 3 L87 15 L59.6 15 Z" fill="#F57A1E"/><path d="M92.4 3 L156 3 L153 15 L88 15 Z" fill="#7E0A98"/><path d="M157 3 L196.6 3 L200 15 L153 15 Z" fill="#12127E"/><path d="M197 3 L267.2 3 L261.6 15 L201 15 Z" fill="#FFFFFF"/><path d="M201 14.2 L261.8 14.2" stroke="#A040C0" stroke-width="1.4"/><path d="M88 15 L92.4 3 M153 15 L157 3 M197 3 L201 15 M261.6 15 L267.2 3" stroke="#2A2A40" stroke-width="0.9" fill="none"/></svg>
<div class="t" style="left:64.5px;top:585px;font-size:10px;letter-spacing:-0.3px;color:#fff;">Plan</div>
<div class="t" style="left:96.8px;top:585px;font-size:10px;letter-spacing:0.3px;color:#fff;">Implement</div>
<div class="t" style="left:160.3px;top:585px;font-size:10px;letter-spacing:0.2px;color:#fff;">Deploy</div>
<div class="t" style="left:203.8px;top:585px;font-size:10px;letter-spacing:0.1px;color:#000;font-weight:bold;">All_Phases</div>
<div style="position:absolute;left:504.50px;top:583.00px;width:1.50px;height:12.50px;background:#222;"></div>
<div style="position:absolute;left:506.00px;top:583.00px;width:330.00px;height:12.50px;background:#FAFAF7;"></div>
<div style="position:absolute;left:507.00px;top:584.00px;width:12.00px;height:11.00px;background:linear-gradient(135deg,#DDE8FC,#B8CEF4);border:1px solid #fff;border-radius:2px;"></div>
<svg style="position:absolute;left:509px;top:585.5px" width="8" height="9"><path d="M5.5 1 L2 4.5 L5.5 8" stroke="#4D6185" stroke-width="1.8" fill="none"/></svg>
<div style="position:absolute;left:521.00px;top:584.00px;width:242.00px;height:11.00px;background:linear-gradient(#CBDCFA,#B5CCF4);border:1px solid #fff;border-radius:2px;"></div>
<div style="position:absolute;left:638.00px;top:587.00px;width:1.00px;height:5.00px;background:#8EA8DA;"></div>
<div style="position:absolute;left:640.00px;top:587.00px;width:1.00px;height:5.00px;background:#8EA8DA;"></div>
<div style="position:absolute;left:642.00px;top:587.00px;width:1.00px;height:5.00px;background:#8EA8DA;"></div>
<div style="position:absolute;left:644.00px;top:587.00px;width:1.00px;height:5.00px;background:#8EA8DA;"></div>
<div style="position:absolute;left:817.00px;top:584.00px;width:12.00px;height:11.00px;background:linear-gradient(135deg,#DDE8FC,#B8CEF4);border:1px solid #fff;border-radius:2px;"></div>
<svg style="position:absolute;left:819px;top:585.5px" width="8" height="9"><path d="M2.5 1 L6 4.5 L2.5 8" stroke="#4D6185" stroke-width="1.8" fill="none"/></svg>
<div style="position:absolute;left:834.50px;top:584.00px;width:1.50px;height:11.50px;background:#222;"></div>
<div style="position:absolute;left:0.00px;top:596.00px;width:850.00px;height:17.00px;background:#ECE9D8;"></div>
<div class="t" style="left:4px;top:601.8px;font-size:9.6px;color:#333;">Ready</div>
<div style="position:absolute;left:592.00px;top:599.50px;width:28.00px;height:13.50px;border:1px solid #D2CEBE;border-right-color:#fff;border-bottom:none;"></div>
<div style="position:absolute;left:621.00px;top:599.50px;width:92.50px;height:13.50px;border:1px solid #D2CEBE;border-right-color:#fff;border-bottom:none;"></div>
<div style="position:absolute;left:715.00px;top:599.50px;width:19.00px;height:13.50px;border:1px solid #D2CEBE;border-right-color:#fff;border-bottom:none;"></div>
<div style="position:absolute;left:735.50px;top:599.50px;width:25.50px;height:13.50px;border:1px solid #D2CEBE;border-right-color:#fff;border-bottom:none;"></div>
<div style="position:absolute;left:762.50px;top:599.50px;width:22.50px;height:13.50px;border:1px solid #D2CEBE;border-right-color:#fff;border-bottom:none;"></div>
<div style="position:absolute;left:786.50px;top:599.50px;width:21.00px;height:13.50px;border:1px solid #D2CEBE;border-right-color:#fff;border-bottom:none;"></div>
<div style="position:absolute;left:809.50px;top:599.50px;width:20.00px;height:13.50px;border:1px solid #D2CEBE;border-right-color:#fff;border-bottom:none;"></div>
<div style="position:absolute;left:831.00px;top:599.50px;width:17.50px;height:13.50px;border:1px solid #D2CEBE;border-right-color:#fff;border-bottom:none;"></div>
<svg style="position:absolute;left:585px;top:565px" width="15" height="15"><path d="M5 1 h4 v4 h4 v4 h-4 v4 h-4 v-4 h-4 v-4 h4 z" fill="#fff" stroke="#000" stroke-width="1.6"/></svg>
</div></body></html>
